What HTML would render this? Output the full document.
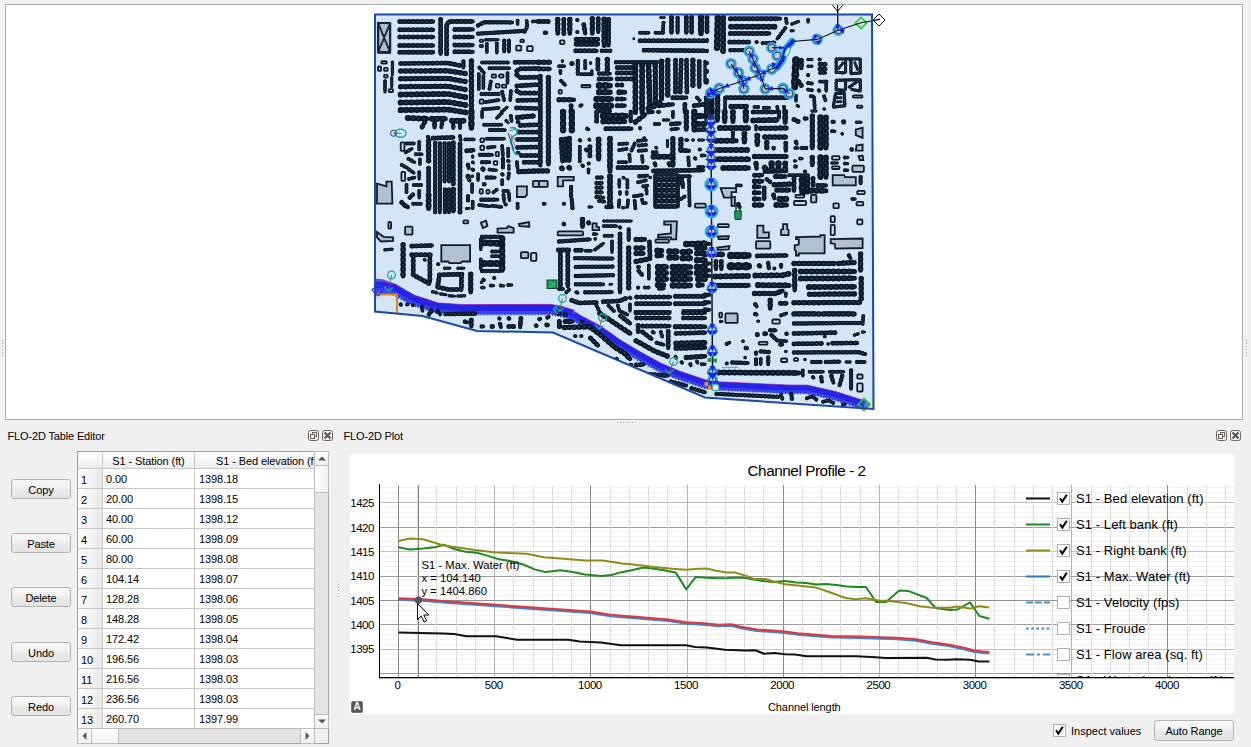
<!DOCTYPE html>
<html><head><meta charset="utf-8"><title>FLO-2D</title>
<style>
html,body{margin:0;padding:0}
body{width:1251px;height:747px;overflow:hidden;background:#f0f0f0;position:relative;font-family:"Liberation Sans",sans-serif;font-size:11px;color:#000}
.abs{position:absolute}
div{position:absolute;box-sizing:border-box;white-space:nowrap}
#map{left:5px;top:4px;width:1238px;height:416px;background:#fff;border:1px solid #adadad;overflow:hidden}
.ttl{font-size:11px;line-height:13px;letter-spacing:-0.15px}
.btn{height:20px;border:1px solid #b2b2b2;border-radius:3px;background:linear-gradient(#f8f8f8,#f0f0f0 48%,#e9e9e9 52%,#e4e4e4);text-align:center;line-height:21px;font-size:11px;letter-spacing:-0.1px}
.dk{width:11px;height:11px;border:1px solid #6a6560;border-radius:2.5px}
#tbl{left:77px;top:451px;width:252px;height:293px;background:#fff;border:1px solid #a0a0a0;overflow:hidden}
.hd{top:452px;height:17px;background:linear-gradient(#ffffff,#f4f4f4 60%,#ececec);border-right:1px solid #c8c8c8;border-bottom:1px solid #c8c8c8;line-height:18px;text-align:center;overflow:hidden;letter-spacing:-0.1px}
.rh{left:78px;width:25px;height:20px;background:linear-gradient(90deg,#ffffff,#f2f2f2 60%,#e8e8e8);border-right:1px solid #c8c8c8;border-bottom:1px solid #c8c8c8;line-height:23px;padding-left:3px;letter-spacing:-0.1px}
.c1{left:103px;width:92px;height:20px;background:#fff;border-right:1px solid #c8c8c8;border-bottom:1px solid #c8c8c8;line-height:21px;padding-left:3px;letter-spacing:-0.1px}
.c2{left:195px;width:120px;height:20px;background:#fff;border-bottom:1px solid #c8c8c8;line-height:21px;padding-left:4px;letter-spacing:-0.1px}
#plot{left:350px;top:454px;width:884px;height:260px;background:#fff;overflow:hidden}
.yl{left:348px;width:26px;text-align:right;line-height:13px;font-size:11.5px;letter-spacing:-0.45px}
.xl{width:40px;text-align:center;line-height:13px;top:679px;font-size:11.5px;letter-spacing:-0.45px}
.dot{width:1px;height:1px;background:#a0a0a0;box-shadow:1px 1px 0 #fff}
.sb{background:linear-gradient(#fbfbfb,#f0f0f0);border:1px solid #bcbcbc}
.cb{width:13px;height:13px;background:#fff;border:1px solid #b0b0b0;padding:0;line-height:0}
.lg{font-size:13px;line-height:18px;letter-spacing:0.08px}
.tip{left:421.5px;font-size:11.3px;line-height:13px}
</style></head><body>
<div id="map">
<svg class="abs" style="left:-6px;top:-5px" width="1251" height="425" viewBox="0 0 1251 425">
<polygon points="375,14.5 872,14.5 873.5,409 705,397.5 553,332.5 477,331 422.5,316 375,311.5" fill="#d4e6f5" stroke="none"/>
<polygon points="374.6,278.4 382.6,279.2 393.8,283.2 400,287 397,295 374.6,294.8" fill="#4a58d8"/>
<path d="M375.0 286.5 L383.0 286.8 L394.0 289.0 L413.0 300.0 L437.0 307.8 L462.5 309.6 L550.5 309.4 L560.0 311.0 L572.8 315.0" fill="none" stroke="#404cee" stroke-width="10.0" stroke-linejoin="round"/>
<path d="M375.0 286.5 L383.0 286.8 L394.0 289.0 L413.0 300.0 L437.0 307.8 L462.5 309.6 L550.5 309.4 L560.0 311.0 L572.8 315.0" transform="translate(-1,2.2)" fill="none" stroke="#2a36e6" stroke-width="7.5" stroke-dasharray="1.1 1.9" stroke-linejoin="round"/>
<path d="M375.0 286.5 L383.0 286.8 L394.0 289.0 L413.0 300.0 L437.0 307.8 L462.5 309.6 L550.5 309.4 L560.0 311.0 L572.8 315.0" transform="translate(0.6,-1.7)" fill="none" stroke="#2424e2" stroke-width="6.4" stroke-linejoin="round"/>
<path d="M572.8 315.6 L579.0 319.3 L599.2 330.0 L619.3 344.1 L639.4 356.1 L659.5 367.1 L679.6 375.6 L705.0 384.1 L718.6 386.0 L786.5 389.2 L806.9 389.4 L834.0 395.5 L864.0 405.0" fill="none" stroke="#404cee" stroke-width="8.4" stroke-linejoin="round"/>
<path d="M572.8 315.6 L579.0 319.3 L599.2 330.0 L619.3 344.1 L639.4 356.1 L659.5 367.1 L679.6 375.6 L705.0 384.1 L718.6 386.0 L786.5 389.2 L806.9 389.4 L834.0 395.5 L864.0 405.0" transform="translate(-1,1.8)" fill="none" stroke="#2a36e6" stroke-width="6.3" stroke-dasharray="1.1 1.9" stroke-linejoin="round"/>
<path d="M572.8 315.6 L579.0 319.3 L599.2 330.0 L619.3 344.1 L639.4 356.1 L659.5 367.1 L679.6 375.6 L705.0 384.1 L718.6 386.0 L786.5 389.2 L806.9 389.4 L834.0 395.5 L864.0 405.0" transform="translate(0.6,-1.4)" fill="none" stroke="#2424e2" stroke-width="5.4" stroke-linejoin="round"/>
<path d="M375.5 281.5 L383.5 281.8 L394.5 284.0 L413.5 295.0 L437.5 302.8 L463.0 304.6 L551.0 304.4 L560.5 306.0 L573.3 310.0 L579.5 315.0 L599.7 325.7 L619.8 339.8 L639.9 351.8 L660.0 362.8 L680.1 371.3 L705.5 379.8 L719.1 381.7 L787.0 384.9 L807.4 385.1 L834.5 391.2 L864.5 400.7" fill="none" stroke="#a020a0" stroke-width="0.8" stroke-opacity="0.8"/>
<clipPath id="mc"><polygon points="375,14.5 872,14.5 873.5,409 705,397.5 553,332.5 477,331 422.5,316 375,311.5"/></clipPath><g clip-path="url(#mc)">
<g stroke="#0b1b2b" stroke-width="1.8">
<rect x="378.1" y="23.0" width="12.0" height="29.5" rx="1" fill="#b3c1cf"/>
<polygon points="377.0,183.6 386.4,186.3 386.4,181.6 391.7,181.6 392.4,203.7 377.0,203.7" fill="#b3c1cf"/>
<polygon points="516.9,186.3 526.9,186.3 526.9,195.0 524.9,197.0 516.9,197.0" fill="#b3c1cf"/>
<rect x="533.0" y="180.9" width="6.7" height="6.0" rx="1" fill="#b3c1cf"/>
<rect x="539.0" y="180.9" width="8.7" height="6.0" rx="1" fill="#b3c1cf"/>
<polygon points="557.7,176.9 573.8,176.9 573.8,180.3 563.1,180.3 563.1,186.3 557.7,186.3" fill="#b3c1cf"/>
<rect x="695.0" y="203.7" width="10.7" height="4.0" rx="1" fill="#b3c1cf"/>
<polygon points="855.8,129.7 862.6,127.6 862.6,137.8 855.8,135.1" fill="#b3c1cf"/>
<polygon points="856.5,145.3 862.6,144.6 862.6,150.7 855.8,150.7" fill="#b3c1cf"/>
<polygon points="858.5,156.2 862.6,155.5 863.3,160.2 859.9,160.2" fill="#b3c1cf"/>
<rect x="852.4" y="165.7" width="11.5" height="6.1" rx="1" fill="#b3c1cf"/>
<polygon points="832.7,175.2 844.3,175.2 844.9,177.2 855.8,177.2 855.8,185.4 832.7,185.4" fill="#b3c1cf"/>
<rect x="811.0" y="194.9" width="5.4" height="7.5" rx="1" fill="#b3c1cf"/>
<polygon points="720.6,188.1 736.2,188.1 736.2,192.2 731.5,192.2 731.5,197.6 724.0,197.6" fill="#b3c1cf"/>
<polygon points="731.5,196.9 734.9,196.9 734.9,205.8 731.5,205.8" fill="#b3c1cf"/>
<rect x="405.1" y="226.7" width="7.4" height="8.0" rx="1" fill="#b3c1cf"/>
<polygon points="377.0,232.1 383.7,236.8 393.1,237.4 393.1,240.8 381.0,241.5 377.0,237.4" fill="#b3c1cf"/>
<polygon points="480.8,222.7 486.1,220.7 487.5,226.1 482.8,228.1" fill="#b3c1cf"/>
<polygon points="497.5,228.7 506.9,228.1 508.2,226.1 513.6,228.1 513.6,232.7 497.5,232.7" fill="#b3c1cf"/>
<polygon points="518.9,224.0 529.0,222.0 529.4,226.7 519.6,226.1" fill="#b3c1cf"/>
<rect x="520.9" y="252.2" width="7.4" height="6.0" rx="1" fill="#b3c1cf"/>
<polygon points="441.3,245.2 470.1,245.2 470.1,261.5 462.0,261.5 460.7,263.1 449.3,263.1 448.0,261.5 441.3,261.5" fill="#b3c1cf"/>
<polygon points="592.5,223.4 596.6,223.4 596.6,226.7 599.2,227.4 599.2,230.1 592.5,230.1" fill="#b3c1cf"/>
<rect x="557.7" y="231.4" width="25.4" height="4.0" rx="1" fill="#b3c1cf"/>
<polygon points="664.2,221.4 676.9,221.4 676.2,239.4 670.9,239.4 670.9,237.4 658.1,237.4 658.1,234.8 670.9,233.4 670.9,224.7 664.2,224.7" fill="#b3c1cf"/>
<rect x="655.5" y="239.4" width="13.4" height="3.3" rx="1" fill="#b3c1cf"/>
<rect x="717.9" y="224.2" width="10.9" height="3.0" rx="1" fill="#b3c1cf"/>
<polygon points="717.9,236.5 728.8,236.2 728.1,239.2 718.6,239.2" fill="#b3c1cf"/>
<polygon points="717.2,247.6 729.5,246.0 728.8,249.4 717.9,249.8" fill="#b3c1cf"/>
<polygon points="757.3,225.6 763.4,225.6 763.4,232.4 768.9,232.4 768.9,237.8 757.3,237.8" fill="#b3c1cf"/>
<rect x="756.0" y="241.2" width="14.3" height="7.5" rx="1" fill="#b3c1cf"/>
<polygon points="783.1,224.2 787.2,224.2 787.2,229.0 788.6,229.7 788.6,235.1 781.1,235.1 781.1,229.7 783.1,229.0" fill="#b3c1cf"/>
<polygon points="796.0,237.1 820.5,236.5 820.5,235.1 824.6,235.1 824.6,253.4 798.8,253.4 798.8,255.5 796.0,255.5 796.0,250.7 794.7,250.0 794.7,245.3 798.8,244.6 798.8,239.2 796.0,239.2" fill="#b3c1cf"/>
<polygon points="830.7,239.2 862.6,238.5 862.6,248.0 835.4,248.7 834.8,243.9 830.7,243.2" fill="#b3c1cf"/>
<rect x="725.4" y="313.4" width="12.2" height="9.5" rx="1" fill="#b3c1cf"/>
</g>
<g fill="none" stroke="#0b1b2b" stroke-linecap="round" stroke-linejoin="round">
<path stroke-width="2.0" stroke-dasharray="0.01 3.20" d="M378.1 23.0 L390.1 52.4 M390.1 23.0 L378.1 52.4"/>
<path stroke-width="1.7" d="M378.1 23.0 L390.1 52.4 M390.1 23.0 L378.1 52.4"/>
<path stroke="#3a5268" stroke-linecap="butt" stroke-width="0.9" stroke-dasharray="1.4 1.81" stroke-dashoffset="0.7" d="M378.1 23.0 L390.1 52.4 M390.1 23.0 L378.1 52.4"/>
<path stroke-width="2.5" stroke-dasharray="0.01 3.20" d="M378.1 23.0 L390.1 23.0 L390.1 52.4 L378.1 52.4 L378.1 23.0 M794.7 312.5 L816.4 312.5 M824.6 312.5 L851.7 312.5"/>
<path stroke-width="2.1" d="M378.1 23.0 L390.1 23.0 L390.1 52.4 L378.1 52.4 L378.1 23.0 M794.7 312.5 L816.4 312.5 M824.6 312.5 L851.7 312.5"/>
<path stroke="#3a5268" stroke-linecap="butt" stroke-width="0.9" stroke-dasharray="1.4 1.81" stroke-dashoffset="0.7" d="M378.1 23.0 L390.1 23.0 L390.1 52.4 L378.1 52.4 L378.1 23.0 M794.7 312.5 L816.4 312.5 M824.6 312.5 L851.7 312.5"/>
<path stroke-width="3.0" stroke-dasharray="0.01 3.20" d="M660.8 17.4 L664.2 17.4 M838.9 68.2 L842.9 62.9 M854.9 62.9 L857.6 69.6 M837.5 97.7 L841.5 97.7 M837.5 101.7 L841.5 101.7 M610.0 284.3 L612.0 284.3"/>
<path stroke-width="2.5" d="M660.8 17.4 L664.2 17.4 M838.9 68.2 L842.9 62.9 M854.9 62.9 L857.6 69.6 M837.5 97.7 L841.5 97.7 M837.5 101.7 L841.5 101.7 M610.0 284.3 L612.0 284.3"/>
<path stroke="#3a5268" stroke-linecap="butt" stroke-width="0.9" stroke-dasharray="1.4 1.81" stroke-dashoffset="0.7" d="M660.8 17.4 L664.2 17.4 M838.9 68.2 L842.9 62.9 M854.9 62.9 L857.6 69.6 M837.5 97.7 L841.5 97.7 M837.5 101.7 L841.5 101.7 M610.0 284.3 L612.0 284.3"/>
<path stroke-width="3.5" stroke-dasharray="0.01 3.20" d="M485.7 39.7 L498.2 39.7 M392.4 62.2 L392.4 74.9 M391.7 77.9 L391.7 87.0 M501.8 111.7 L506.9 107.3 M633.8 38.8 L633.8 38.8 M562.4 60.9 L562.4 61.5 M590.5 62.9 L590.5 63.5 M591.9 70.9 L591.9 74.9 M705.0 61.5 L705.0 83.0 M792.0 24.0 L798.7 21.4 M791.3 30.7 L793.4 30.7 M808.1 59.5 L812.1 59.5 M808.1 66.2 L812.1 66.2 M812.1 111.1 L816.1 111.1 M824.1 109.1 L824.8 109.1 M797.4 105.7 L798.7 106.4 M836.2 72.2 L836.2 58.9 L860.3 58.9 L860.3 72.9 M845.6 58.9 L845.6 72.2 M850.9 58.9 L850.9 73.6 M836.2 72.2 L844.2 72.9 M852.3 73.6 L860.3 72.9 M836.2 89.6 L836.2 80.3 L860.3 79.6 L860.3 91.0 M836.2 89.6 L844.2 90.3 M845.6 80.3 L845.6 89.6 M849.6 87.0 L858.9 80.3 M852.3 89.6 L860.3 91.0 M833.5 105.7 L835.5 93.7 L844.2 92.3 L844.9 105.7 L833.5 107.0 M506.2 120.7 L508.2 122.7 M472.7 156.2 L472.7 157.5 M472.7 162.2 L473.4 162.9 M472.1 176.3 L472.7 176.3 M466.7 208.4 L469.4 208.4 M508.9 165.5 L508.9 169.6 M663.5 120.0 L668.9 120.0 M589.2 139.4 L589.9 140.1 M644.1 138.1 L644.8 138.1 M656.1 147.5 L656.8 148.1 M667.5 140.8 L667.5 146.8 M692.9 140.1 L693.6 140.1 M699.0 140.1 L703.7 140.1 M589.2 207.0 L591.9 207.0 M623.3 177.6 L624.7 178.3 M622.7 207.7 L624.7 207.7 M650.1 177.6 L650.8 177.6 M654.8 176.3 L654.8 205.7 M678.2 176.3 L678.2 205.7 M842.2 133.7 L842.5 134.0 M856.5 122.2 L861.2 122.2 M794.7 160.9 L796.0 160.9 M832.0 163.0 L837.5 163.0 M385.0 249.8 L392.4 249.2 M424.5 259.5 L425.2 260.2 M444.6 268.2 L450.0 268.2 M458.0 268.2 L464.0 268.2 M432.6 291.7 L437.3 293.0 M440.6 293.9 L446.0 294.7 M449.3 295.7 L454.7 296.1 M458.0 296.1 L464.7 295.7 M481.4 282.3 L482.1 282.3 M595.2 238.8 L595.2 239.4 M603.9 221.1 L631.4 221.1 M635.4 311.7 L670.2 311.7 M540.3 318.7 L540.6 319.0 M547.7 317.4 L548.4 317.6 M720.6 321.5 L722.0 321.5 M758.0 321.2 L758.7 321.2 M824.6 336.5 L825.2 336.7 M854.5 335.1 L858.5 333.7 M862.6 332.1 L864.6 332.1 M743.0 341.2 L743.3 341.5 M828.0 343.9 L828.6 343.9 M785.8 351.4 L786.1 351.4 M745.1 357.5 L745.2 357.7 M804.9 359.6 L805.1 359.6 M846.3 362.0 L850.4 362.0"/>
<path stroke-width="2.9" d="M485.7 39.7 L498.2 39.7 M392.4 62.2 L392.4 74.9 M391.7 77.9 L391.7 87.0 M501.8 111.7 L506.9 107.3 M633.8 38.8 L633.8 38.8 M562.4 60.9 L562.4 61.5 M590.5 62.9 L590.5 63.5 M591.9 70.9 L591.9 74.9 M705.0 61.5 L705.0 83.0 M792.0 24.0 L798.7 21.4 M791.3 30.7 L793.4 30.7 M808.1 59.5 L812.1 59.5 M808.1 66.2 L812.1 66.2 M812.1 111.1 L816.1 111.1 M824.1 109.1 L824.8 109.1 M797.4 105.7 L798.7 106.4 M836.2 72.2 L836.2 58.9 L860.3 58.9 L860.3 72.9 M845.6 58.9 L845.6 72.2 M850.9 58.9 L850.9 73.6 M836.2 72.2 L844.2 72.9 M852.3 73.6 L860.3 72.9 M836.2 89.6 L836.2 80.3 L860.3 79.6 L860.3 91.0 M836.2 89.6 L844.2 90.3 M845.6 80.3 L845.6 89.6 M849.6 87.0 L858.9 80.3 M852.3 89.6 L860.3 91.0 M833.5 105.7 L835.5 93.7 L844.2 92.3 L844.9 105.7 L833.5 107.0 M506.2 120.7 L508.2 122.7 M472.7 156.2 L472.7 157.5 M472.7 162.2 L473.4 162.9 M472.1 176.3 L472.7 176.3 M466.7 208.4 L469.4 208.4 M508.9 165.5 L508.9 169.6 M663.5 120.0 L668.9 120.0 M589.2 139.4 L589.9 140.1 M644.1 138.1 L644.8 138.1 M656.1 147.5 L656.8 148.1 M667.5 140.8 L667.5 146.8 M692.9 140.1 L693.6 140.1 M699.0 140.1 L703.7 140.1 M589.2 207.0 L591.9 207.0 M623.3 177.6 L624.7 178.3 M622.7 207.7 L624.7 207.7 M650.1 177.6 L650.8 177.6 M654.8 176.3 L654.8 205.7 M678.2 176.3 L678.2 205.7 M842.2 133.7 L842.5 134.0 M856.5 122.2 L861.2 122.2 M794.7 160.9 L796.0 160.9 M832.0 163.0 L837.5 163.0 M385.0 249.8 L392.4 249.2 M424.5 259.5 L425.2 260.2 M444.6 268.2 L450.0 268.2 M458.0 268.2 L464.0 268.2 M432.6 291.7 L437.3 293.0 M440.6 293.9 L446.0 294.7 M449.3 295.7 L454.7 296.1 M458.0 296.1 L464.7 295.7 M481.4 282.3 L482.1 282.3 M595.2 238.8 L595.2 239.4 M603.9 221.1 L631.4 221.1 M635.4 311.7 L670.2 311.7 M540.3 318.7 L540.6 319.0 M547.7 317.4 L548.4 317.6 M720.6 321.5 L722.0 321.5 M758.0 321.2 L758.7 321.2 M824.6 336.5 L825.2 336.7 M854.5 335.1 L858.5 333.7 M862.6 332.1 L864.6 332.1 M743.0 341.2 L743.3 341.5 M828.0 343.9 L828.6 343.9 M785.8 351.4 L786.1 351.4 M745.1 357.5 L745.2 357.7 M804.9 359.6 L805.1 359.6 M846.3 362.0 L850.4 362.0"/>
<path stroke="#3a5268" stroke-linecap="butt" stroke-width="0.9" stroke-dasharray="1.4 1.81" stroke-dashoffset="0.7" d="M485.7 39.7 L498.2 39.7 M392.4 62.2 L392.4 74.9 M391.7 77.9 L391.7 87.0 M501.8 111.7 L506.9 107.3 M633.8 38.8 L633.8 38.8 M562.4 60.9 L562.4 61.5 M590.5 62.9 L590.5 63.5 M591.9 70.9 L591.9 74.9 M705.0 61.5 L705.0 83.0 M792.0 24.0 L798.7 21.4 M791.3 30.7 L793.4 30.7 M808.1 59.5 L812.1 59.5 M808.1 66.2 L812.1 66.2 M812.1 111.1 L816.1 111.1 M824.1 109.1 L824.8 109.1 M797.4 105.7 L798.7 106.4 M836.2 72.2 L836.2 58.9 L860.3 58.9 L860.3 72.9 M845.6 58.9 L845.6 72.2 M850.9 58.9 L850.9 73.6 M836.2 72.2 L844.2 72.9 M852.3 73.6 L860.3 72.9 M836.2 89.6 L836.2 80.3 L860.3 79.6 L860.3 91.0 M836.2 89.6 L844.2 90.3 M845.6 80.3 L845.6 89.6 M849.6 87.0 L858.9 80.3 M852.3 89.6 L860.3 91.0 M833.5 105.7 L835.5 93.7 L844.2 92.3 L844.9 105.7 L833.5 107.0 M506.2 120.7 L508.2 122.7 M472.7 156.2 L472.7 157.5 M472.7 162.2 L473.4 162.9 M472.1 176.3 L472.7 176.3 M466.7 208.4 L469.4 208.4 M508.9 165.5 L508.9 169.6 M663.5 120.0 L668.9 120.0 M589.2 139.4 L589.9 140.1 M644.1 138.1 L644.8 138.1 M656.1 147.5 L656.8 148.1 M667.5 140.8 L667.5 146.8 M692.9 140.1 L693.6 140.1 M699.0 140.1 L703.7 140.1 M589.2 207.0 L591.9 207.0 M623.3 177.6 L624.7 178.3 M622.7 207.7 L624.7 207.7 M650.1 177.6 L650.8 177.6 M654.8 176.3 L654.8 205.7 M678.2 176.3 L678.2 205.7 M842.2 133.7 L842.5 134.0 M856.5 122.2 L861.2 122.2 M794.7 160.9 L796.0 160.9 M832.0 163.0 L837.5 163.0 M385.0 249.8 L392.4 249.2 M424.5 259.5 L425.2 260.2 M444.6 268.2 L450.0 268.2 M458.0 268.2 L464.0 268.2 M432.6 291.7 L437.3 293.0 M440.6 293.9 L446.0 294.7 M449.3 295.7 L454.7 296.1 M458.0 296.1 L464.7 295.7 M481.4 282.3 L482.1 282.3 M595.2 238.8 L595.2 239.4 M603.9 221.1 L631.4 221.1 M635.4 311.7 L670.2 311.7 M540.3 318.7 L540.6 319.0 M547.7 317.4 L548.4 317.6 M720.6 321.5 L722.0 321.5 M758.0 321.2 L758.7 321.2 M824.6 336.5 L825.2 336.7 M854.5 335.1 L858.5 333.7 M862.6 332.1 L864.6 332.1 M743.0 341.2 L743.3 341.5 M828.0 343.9 L828.6 343.9 M785.8 351.4 L786.1 351.4 M745.1 357.5 L745.2 357.7 M804.9 359.6 L805.1 359.6 M846.3 362.0 L850.4 362.0"/>
<path stroke-width="4.0" stroke-dasharray="0.01 3.60" d="M517.6 20.7 L517.6 24.3 M526.7 21.1 L527.2 26.7 L524.5 32.1 M533.0 21.4 L539.0 21.4 M486.8 44.1 L486.8 52.2 M496.8 43.5 L496.8 52.8 M385.0 81.2 L385.0 91.7 M482.1 62.5 L508.2 62.5 M479.4 67.6 L484.1 72.9 M489.5 68.2 L509.5 68.2 M478.8 74.2 L478.8 89.0 M483.4 76.3 L483.4 88.3 M507.5 73.2 L507.5 83.0 M490.8 81.6 L489.5 89.0 M502.2 91.9 L504.2 100.4 M510.9 91.3 L510.2 100.4 M485.7 102.0 L498.8 100.0 M483.0 109.3 L498.8 108.0 M577.2 20.0 L577.8 20.0 M577.2 32.1 L577.8 32.1 M663.5 22.7 L662.8 32.7 M640.1 32.7 L648.8 32.7 M655.5 32.7 L663.5 32.7 M559.1 66.2 L564.4 66.2 M560.4 70.9 L560.4 73.6 M561.1 80.9 L565.1 85.0 M580.5 105.7 L581.8 105.0 M585.2 60.9 L585.2 68.2 M581.2 74.2 L591.2 74.2 M697.0 97.7 L699.6 100.4 M707.0 40.1 L707.0 41.5 M707.0 50.8 L707.0 51.5 M707.0 62.9 L707.0 63.5 M707.0 70.9 L707.0 72.2 M707.0 80.3 L707.0 83.0 M756.5 42.1 L757.2 42.1 M762.6 43.1 L774.6 42.5 M786.0 18.7 L786.7 23.4 M808.1 20.0 L808.1 22.0 M785.3 28.1 L777.3 38.8 M808.1 74.9 L808.1 75.6 M808.1 83.0 L812.1 83.6 M808.1 89.6 L812.1 90.3 M819.5 59.5 L820.1 59.5 M820.1 72.9 L825.5 72.9 M820.1 81.6 L826.8 81.6 M826.2 81.6 L826.2 91.0 M818.8 90.3 L819.5 91.0 M810.8 96.3 L813.4 96.3 M814.1 97.7 L814.8 108.4 M824.1 96.3 L825.5 100.4 M796.0 95.7 L796.0 101.0 M725.1 97.7 L725.1 112.4 M754.5 107.0 L758.5 107.0 M763.9 107.7 L769.3 107.7 M777.3 107.0 L778.0 112.4 M784.0 107.0 L784.7 112.4 M482.1 112.0 L482.1 117.4 M501.5 113.3 L496.8 118.0 M510.9 116.0 L511.6 121.4 M484.1 124.7 L501.5 124.7 M517.6 122.0 L518.9 122.0 M517.6 152.8 L518.9 152.8 M516.9 162.2 L517.6 168.2 M427.9 136.8 L428.6 137.4 M460.0 136.1 L460.7 140.1 M465.4 139.4 L474.1 139.4 M406.5 143.5 L413.8 143.5 M419.2 142.1 L419.2 149.5 M405.8 152.2 L411.8 148.8 M415.8 154.2 L421.9 154.2 M408.5 158.9 L414.5 162.2 M419.9 159.5 L419.9 164.2 M401.8 164.9 L407.8 168.2 M409.1 169.6 L413.8 172.9 M419.2 172.2 L419.2 178.9 M409.1 178.9 L414.5 177.6 M413.8 185.0 L421.2 185.0 M406.5 185.0 L406.5 192.3 M419.2 191.0 L419.2 197.7 M413.2 203.7 L421.2 203.7 M472.7 169.6 L473.4 170.2 M472.1 184.3 L472.1 192.3 M472.7 201.7 L472.7 208.4 M478.1 174.2 L478.1 180.3 M486.8 138.8 L504.2 138.8 M488.1 147.5 L494.8 146.8 M502.2 146.1 L502.9 155.5 M508.2 148.8 L508.2 156.2 M508.2 160.9 L508.9 161.5 M489.5 169.6 L496.2 170.2 M502.2 174.2 L502.9 174.9 M508.9 173.6 L508.2 178.9 M502.2 180.3 L502.2 184.3 M493.5 192.3 L496.8 189.6 M503.5 191.0 L508.2 191.0 M503.5 195.0 L504.2 201.7 M508.9 193.7 L509.5 200.4 M479.4 205.0 L489.5 206.4 M492.1 205.7 L501.5 207.0 M505.5 204.4 L506.2 204.4 M517.6 203.7 L517.6 208.4 M587.2 128.7 L588.5 129.4 M658.1 112.0 L659.5 112.0 M640.1 128.1 L640.1 128.7 M654.8 124.0 L659.5 124.0 M671.5 129.4 L678.2 128.7 M672.9 112.0 L672.9 117.4 M579.8 140.1 L580.5 140.8 M579.8 146.8 L579.8 161.5 M585.9 149.5 L586.5 150.8 M582.5 165.5 L583.2 166.2 M588.5 163.5 L589.2 163.5 M588.5 169.6 L588.5 172.9 M619.3 144.1 L627.4 143.5 M634.7 143.5 L631.4 150.8 M619.3 150.2 L626.7 148.8 M629.4 154.8 L630.0 161.5 M618.7 162.2 L626.0 162.2 M638.1 140.8 L646.1 140.1 M638.7 145.5 L646.1 144.8 M638.7 150.8 L646.1 150.2 M642.1 156.2 L642.7 162.2 M652.8 152.2 L656.8 152.2 M686.3 140.1 L687.6 140.1 M699.6 149.5 L700.3 149.5 M688.3 157.5 L688.9 165.5 M695.0 158.2 L695.6 158.9 M701.7 155.5 L705.0 155.5 M698.3 166.9 L703.7 166.9 M543.7 203.7 L545.0 203.7 M563.8 203.7 L564.4 203.7 M599.2 201.0 L604.6 201.7 M619.3 180.3 L619.3 187.0 M627.4 180.3 L627.4 187.6 M620.0 192.3 L620.0 194.3 M626.7 192.3 L626.7 194.3 M619.3 200.4 L618.7 207.0 M628.0 200.4 L627.4 207.0 M638.1 182.3 L646.1 180.3 M643.4 186.3 L647.4 185.6 M646.1 187.0 L646.8 193.7 M634.0 196.3 L642.1 195.0 M634.7 201.0 L635.4 208.4 M642.1 199.7 L642.7 203.0 M644.8 203.0 L646.1 203.0 M655.5 174.9 L677.6 174.9 M679.6 176.3 L690.3 176.3 M688.9 176.3 L689.6 205.7 M680.9 199.0 L684.9 196.3 M756.0 126.3 L756.0 129.7 M832.0 131.3 L834.8 131.3 M795.4 148.0 L798.1 148.0 M800.1 158.6 L802.1 158.6 M844.9 157.5 L847.7 157.5 M844.9 163.6 L847.7 163.6 M844.9 170.2 L847.7 170.2 M852.4 199.0 L855.1 199.0 M804.9 171.4 L805.5 171.4 M789.2 175.2 L808.3 175.2 M736.9 185.4 L741.0 185.4 M438.2 264.2 L438.3 264.3 M480.8 239.4 L480.8 249.5 M492.1 251.5 L498.8 251.5 M492.1 256.2 L498.8 256.2 M480.8 259.5 L480.8 268.9 M483.4 279.6 L484.1 280.3 M494.2 277.9 L494.3 278.0 M482.1 287.6 L484.1 287.6 M490.8 285.6 L493.5 285.6 M500.8 285.6 L503.5 285.9 M508.2 285.0 L511.6 285.0 M400.7 304.4 L401.1 305.0 M407.1 304.4 L407.8 304.4 M412.9 305.0 L413.2 305.4 M421.9 306.4 L422.5 311.1 M430.6 310.4 L431.9 311.7 M593.9 234.1 L596.6 234.1 M603.9 226.1 L616.6 226.1 M620.0 227.4 L620.3 227.7 M604.6 235.8 L612.0 235.8 M612.0 241.5 L612.0 252.2 M585.9 250.8 L591.2 250.8 M595.2 249.5 L603.3 243.5 M576.5 292.3 L577.8 293.0 M559.1 289.0 L563.1 289.0 M566.4 292.3 L569.1 289.6 M630.0 297.7 L630.7 298.3 M596.6 305.7 L599.2 311.1 M608.6 305.7 L614.0 311.1 M618.0 305.7 L619.3 311.1 M630.0 304.4 L630.0 311.1 M638.1 266.9 L639.4 266.9 M648.8 265.5 L648.8 278.9 M638.1 287.6 L638.3 287.9 M644.8 287.6 L648.8 287.6 M683.6 311.1 L705.0 311.1 M774.3 268.4 L774.6 268.4 M785.8 293.5 L785.8 296.2 M547.0 325.4 L547.7 325.4 M559.1 313.3 L560.4 313.6 M559.1 321.4 L560.4 326.7 M581.8 321.4 L583.2 321.6 M575.1 336.1 L575.8 336.1 M581.2 336.1 L581.8 336.1 M622.0 312.0 L627.4 314.7 M652.8 332.1 L654.1 332.7 M660.8 332.1 L662.2 336.8 M675.5 356.8 L676.2 358.2 M681.6 362.2 L682.2 362.9 M690.3 364.2 L690.9 365.5 M697.0 361.5 L697.6 362.9 M701.7 364.2 L705.0 364.2 M781.1 315.4 L786.5 313.4 M863.3 316.1 L862.6 324.2 M777.0 340.5 L786.5 341.2 M726.7 343.9 L729.5 342.6 M726.7 363.4 L727.0 363.4 M760.7 358.9 L760.7 364.3 M802.8 370.4 L802.8 375.9 M809.6 371.8 L823.2 371.8 M830.0 371.8 L843.6 371.8 M813.0 377.2 L813.7 377.9 M781.1 394.9 L782.4 399.0 M806.9 398.3 L812.3 396.2 L816.4 399.6 M823.2 401.7 L828.6 400.3 L833.4 403.0 M842.9 404.4 L844.9 404.4 M499.3 318.4 L499.6 318.7 M539.3 319.2 L539.6 319.5 M547.3 317.6 L548.9 316.8"/>
<path stroke-width="3.4" d="M517.6 20.7 L517.6 24.3 M526.7 21.1 L527.2 26.7 L524.5 32.1 M533.0 21.4 L539.0 21.4 M486.8 44.1 L486.8 52.2 M496.8 43.5 L496.8 52.8 M385.0 81.2 L385.0 91.7 M482.1 62.5 L508.2 62.5 M479.4 67.6 L484.1 72.9 M489.5 68.2 L509.5 68.2 M478.8 74.2 L478.8 89.0 M483.4 76.3 L483.4 88.3 M507.5 73.2 L507.5 83.0 M490.8 81.6 L489.5 89.0 M502.2 91.9 L504.2 100.4 M510.9 91.3 L510.2 100.4 M485.7 102.0 L498.8 100.0 M483.0 109.3 L498.8 108.0 M577.2 20.0 L577.8 20.0 M577.2 32.1 L577.8 32.1 M663.5 22.7 L662.8 32.7 M640.1 32.7 L648.8 32.7 M655.5 32.7 L663.5 32.7 M559.1 66.2 L564.4 66.2 M560.4 70.9 L560.4 73.6 M561.1 80.9 L565.1 85.0 M580.5 105.7 L581.8 105.0 M585.2 60.9 L585.2 68.2 M581.2 74.2 L591.2 74.2 M697.0 97.7 L699.6 100.4 M707.0 40.1 L707.0 41.5 M707.0 50.8 L707.0 51.5 M707.0 62.9 L707.0 63.5 M707.0 70.9 L707.0 72.2 M707.0 80.3 L707.0 83.0 M756.5 42.1 L757.2 42.1 M762.6 43.1 L774.6 42.5 M786.0 18.7 L786.7 23.4 M808.1 20.0 L808.1 22.0 M785.3 28.1 L777.3 38.8 M808.1 74.9 L808.1 75.6 M808.1 83.0 L812.1 83.6 M808.1 89.6 L812.1 90.3 M819.5 59.5 L820.1 59.5 M820.1 72.9 L825.5 72.9 M820.1 81.6 L826.8 81.6 M826.2 81.6 L826.2 91.0 M818.8 90.3 L819.5 91.0 M810.8 96.3 L813.4 96.3 M814.1 97.7 L814.8 108.4 M824.1 96.3 L825.5 100.4 M796.0 95.7 L796.0 101.0 M725.1 97.7 L725.1 112.4 M754.5 107.0 L758.5 107.0 M763.9 107.7 L769.3 107.7 M777.3 107.0 L778.0 112.4 M784.0 107.0 L784.7 112.4 M482.1 112.0 L482.1 117.4 M501.5 113.3 L496.8 118.0 M510.9 116.0 L511.6 121.4 M484.1 124.7 L501.5 124.7 M517.6 122.0 L518.9 122.0 M517.6 152.8 L518.9 152.8 M516.9 162.2 L517.6 168.2 M427.9 136.8 L428.6 137.4 M460.0 136.1 L460.7 140.1 M465.4 139.4 L474.1 139.4 M406.5 143.5 L413.8 143.5 M419.2 142.1 L419.2 149.5 M405.8 152.2 L411.8 148.8 M415.8 154.2 L421.9 154.2 M408.5 158.9 L414.5 162.2 M419.9 159.5 L419.9 164.2 M401.8 164.9 L407.8 168.2 M409.1 169.6 L413.8 172.9 M419.2 172.2 L419.2 178.9 M409.1 178.9 L414.5 177.6 M413.8 185.0 L421.2 185.0 M406.5 185.0 L406.5 192.3 M419.2 191.0 L419.2 197.7 M413.2 203.7 L421.2 203.7 M472.7 169.6 L473.4 170.2 M472.1 184.3 L472.1 192.3 M472.7 201.7 L472.7 208.4 M478.1 174.2 L478.1 180.3 M486.8 138.8 L504.2 138.8 M488.1 147.5 L494.8 146.8 M502.2 146.1 L502.9 155.5 M508.2 148.8 L508.2 156.2 M508.2 160.9 L508.9 161.5 M489.5 169.6 L496.2 170.2 M502.2 174.2 L502.9 174.9 M508.9 173.6 L508.2 178.9 M502.2 180.3 L502.2 184.3 M493.5 192.3 L496.8 189.6 M503.5 191.0 L508.2 191.0 M503.5 195.0 L504.2 201.7 M508.9 193.7 L509.5 200.4 M479.4 205.0 L489.5 206.4 M492.1 205.7 L501.5 207.0 M505.5 204.4 L506.2 204.4 M517.6 203.7 L517.6 208.4 M587.2 128.7 L588.5 129.4 M658.1 112.0 L659.5 112.0 M640.1 128.1 L640.1 128.7 M654.8 124.0 L659.5 124.0 M671.5 129.4 L678.2 128.7 M672.9 112.0 L672.9 117.4 M579.8 140.1 L580.5 140.8 M579.8 146.8 L579.8 161.5 M585.9 149.5 L586.5 150.8 M582.5 165.5 L583.2 166.2 M588.5 163.5 L589.2 163.5 M588.5 169.6 L588.5 172.9 M619.3 144.1 L627.4 143.5 M634.7 143.5 L631.4 150.8 M619.3 150.2 L626.7 148.8 M629.4 154.8 L630.0 161.5 M618.7 162.2 L626.0 162.2 M638.1 140.8 L646.1 140.1 M638.7 145.5 L646.1 144.8 M638.7 150.8 L646.1 150.2 M642.1 156.2 L642.7 162.2 M652.8 152.2 L656.8 152.2 M686.3 140.1 L687.6 140.1 M699.6 149.5 L700.3 149.5 M688.3 157.5 L688.9 165.5 M695.0 158.2 L695.6 158.9 M701.7 155.5 L705.0 155.5 M698.3 166.9 L703.7 166.9 M543.7 203.7 L545.0 203.7 M563.8 203.7 L564.4 203.7 M599.2 201.0 L604.6 201.7 M619.3 180.3 L619.3 187.0 M627.4 180.3 L627.4 187.6 M620.0 192.3 L620.0 194.3 M626.7 192.3 L626.7 194.3 M619.3 200.4 L618.7 207.0 M628.0 200.4 L627.4 207.0 M638.1 182.3 L646.1 180.3 M643.4 186.3 L647.4 185.6 M646.1 187.0 L646.8 193.7 M634.0 196.3 L642.1 195.0 M634.7 201.0 L635.4 208.4 M642.1 199.7 L642.7 203.0 M644.8 203.0 L646.1 203.0 M655.5 174.9 L677.6 174.9 M679.6 176.3 L690.3 176.3 M688.9 176.3 L689.6 205.7 M680.9 199.0 L684.9 196.3 M756.0 126.3 L756.0 129.7 M832.0 131.3 L834.8 131.3 M795.4 148.0 L798.1 148.0 M800.1 158.6 L802.1 158.6 M844.9 157.5 L847.7 157.5 M844.9 163.6 L847.7 163.6 M844.9 170.2 L847.7 170.2 M852.4 199.0 L855.1 199.0 M804.9 171.4 L805.5 171.4 M789.2 175.2 L808.3 175.2 M736.9 185.4 L741.0 185.4 M438.2 264.2 L438.3 264.3 M480.8 239.4 L480.8 249.5 M492.1 251.5 L498.8 251.5 M492.1 256.2 L498.8 256.2 M480.8 259.5 L480.8 268.9 M483.4 279.6 L484.1 280.3 M494.2 277.9 L494.3 278.0 M482.1 287.6 L484.1 287.6 M490.8 285.6 L493.5 285.6 M500.8 285.6 L503.5 285.9 M508.2 285.0 L511.6 285.0 M400.7 304.4 L401.1 305.0 M407.1 304.4 L407.8 304.4 M412.9 305.0 L413.2 305.4 M421.9 306.4 L422.5 311.1 M430.6 310.4 L431.9 311.7 M593.9 234.1 L596.6 234.1 M603.9 226.1 L616.6 226.1 M620.0 227.4 L620.3 227.7 M604.6 235.8 L612.0 235.8 M612.0 241.5 L612.0 252.2 M585.9 250.8 L591.2 250.8 M595.2 249.5 L603.3 243.5 M576.5 292.3 L577.8 293.0 M559.1 289.0 L563.1 289.0 M566.4 292.3 L569.1 289.6 M630.0 297.7 L630.7 298.3 M596.6 305.7 L599.2 311.1 M608.6 305.7 L614.0 311.1 M618.0 305.7 L619.3 311.1 M630.0 304.4 L630.0 311.1 M638.1 266.9 L639.4 266.9 M648.8 265.5 L648.8 278.9 M638.1 287.6 L638.3 287.9 M644.8 287.6 L648.8 287.6 M683.6 311.1 L705.0 311.1 M774.3 268.4 L774.6 268.4 M785.8 293.5 L785.8 296.2 M547.0 325.4 L547.7 325.4 M559.1 313.3 L560.4 313.6 M559.1 321.4 L560.4 326.7 M581.8 321.4 L583.2 321.6 M575.1 336.1 L575.8 336.1 M581.2 336.1 L581.8 336.1 M622.0 312.0 L627.4 314.7 M652.8 332.1 L654.1 332.7 M660.8 332.1 L662.2 336.8 M675.5 356.8 L676.2 358.2 M681.6 362.2 L682.2 362.9 M690.3 364.2 L690.9 365.5 M697.0 361.5 L697.6 362.9 M701.7 364.2 L705.0 364.2 M781.1 315.4 L786.5 313.4 M863.3 316.1 L862.6 324.2 M777.0 340.5 L786.5 341.2 M726.7 343.9 L729.5 342.6 M726.7 363.4 L727.0 363.4 M760.7 358.9 L760.7 364.3 M802.8 370.4 L802.8 375.9 M809.6 371.8 L823.2 371.8 M830.0 371.8 L843.6 371.8 M813.0 377.2 L813.7 377.9 M781.1 394.9 L782.4 399.0 M806.9 398.3 L812.3 396.2 L816.4 399.6 M823.2 401.7 L828.6 400.3 L833.4 403.0 M842.9 404.4 L844.9 404.4 M499.3 318.4 L499.6 318.7 M539.3 319.2 L539.6 319.5 M547.3 317.6 L548.9 316.8"/>
<path stroke="#3a5268" stroke-linecap="butt" stroke-width="1.0" stroke-dasharray="1.4 2.21" stroke-dashoffset="0.7" d="M517.6 20.7 L517.6 24.3 M526.7 21.1 L527.2 26.7 L524.5 32.1 M533.0 21.4 L539.0 21.4 M486.8 44.1 L486.8 52.2 M496.8 43.5 L496.8 52.8 M385.0 81.2 L385.0 91.7 M482.1 62.5 L508.2 62.5 M479.4 67.6 L484.1 72.9 M489.5 68.2 L509.5 68.2 M478.8 74.2 L478.8 89.0 M483.4 76.3 L483.4 88.3 M507.5 73.2 L507.5 83.0 M490.8 81.6 L489.5 89.0 M502.2 91.9 L504.2 100.4 M510.9 91.3 L510.2 100.4 M485.7 102.0 L498.8 100.0 M483.0 109.3 L498.8 108.0 M577.2 20.0 L577.8 20.0 M577.2 32.1 L577.8 32.1 M663.5 22.7 L662.8 32.7 M640.1 32.7 L648.8 32.7 M655.5 32.7 L663.5 32.7 M559.1 66.2 L564.4 66.2 M560.4 70.9 L560.4 73.6 M561.1 80.9 L565.1 85.0 M580.5 105.7 L581.8 105.0 M585.2 60.9 L585.2 68.2 M581.2 74.2 L591.2 74.2 M697.0 97.7 L699.6 100.4 M707.0 40.1 L707.0 41.5 M707.0 50.8 L707.0 51.5 M707.0 62.9 L707.0 63.5 M707.0 70.9 L707.0 72.2 M707.0 80.3 L707.0 83.0 M756.5 42.1 L757.2 42.1 M762.6 43.1 L774.6 42.5 M786.0 18.7 L786.7 23.4 M808.1 20.0 L808.1 22.0 M785.3 28.1 L777.3 38.8 M808.1 74.9 L808.1 75.6 M808.1 83.0 L812.1 83.6 M808.1 89.6 L812.1 90.3 M819.5 59.5 L820.1 59.5 M820.1 72.9 L825.5 72.9 M820.1 81.6 L826.8 81.6 M826.2 81.6 L826.2 91.0 M818.8 90.3 L819.5 91.0 M810.8 96.3 L813.4 96.3 M814.1 97.7 L814.8 108.4 M824.1 96.3 L825.5 100.4 M796.0 95.7 L796.0 101.0 M725.1 97.7 L725.1 112.4 M754.5 107.0 L758.5 107.0 M763.9 107.7 L769.3 107.7 M777.3 107.0 L778.0 112.4 M784.0 107.0 L784.7 112.4 M482.1 112.0 L482.1 117.4 M501.5 113.3 L496.8 118.0 M510.9 116.0 L511.6 121.4 M484.1 124.7 L501.5 124.7 M517.6 122.0 L518.9 122.0 M517.6 152.8 L518.9 152.8 M516.9 162.2 L517.6 168.2 M427.9 136.8 L428.6 137.4 M460.0 136.1 L460.7 140.1 M465.4 139.4 L474.1 139.4 M406.5 143.5 L413.8 143.5 M419.2 142.1 L419.2 149.5 M405.8 152.2 L411.8 148.8 M415.8 154.2 L421.9 154.2 M408.5 158.9 L414.5 162.2 M419.9 159.5 L419.9 164.2 M401.8 164.9 L407.8 168.2 M409.1 169.6 L413.8 172.9 M419.2 172.2 L419.2 178.9 M409.1 178.9 L414.5 177.6 M413.8 185.0 L421.2 185.0 M406.5 185.0 L406.5 192.3 M419.2 191.0 L419.2 197.7 M413.2 203.7 L421.2 203.7 M472.7 169.6 L473.4 170.2 M472.1 184.3 L472.1 192.3 M472.7 201.7 L472.7 208.4 M478.1 174.2 L478.1 180.3 M486.8 138.8 L504.2 138.8 M488.1 147.5 L494.8 146.8 M502.2 146.1 L502.9 155.5 M508.2 148.8 L508.2 156.2 M508.2 160.9 L508.9 161.5 M489.5 169.6 L496.2 170.2 M502.2 174.2 L502.9 174.9 M508.9 173.6 L508.2 178.9 M502.2 180.3 L502.2 184.3 M493.5 192.3 L496.8 189.6 M503.5 191.0 L508.2 191.0 M503.5 195.0 L504.2 201.7 M508.9 193.7 L509.5 200.4 M479.4 205.0 L489.5 206.4 M492.1 205.7 L501.5 207.0 M505.5 204.4 L506.2 204.4 M517.6 203.7 L517.6 208.4 M587.2 128.7 L588.5 129.4 M658.1 112.0 L659.5 112.0 M640.1 128.1 L640.1 128.7 M654.8 124.0 L659.5 124.0 M671.5 129.4 L678.2 128.7 M672.9 112.0 L672.9 117.4 M579.8 140.1 L580.5 140.8 M579.8 146.8 L579.8 161.5 M585.9 149.5 L586.5 150.8 M582.5 165.5 L583.2 166.2 M588.5 163.5 L589.2 163.5 M588.5 169.6 L588.5 172.9 M619.3 144.1 L627.4 143.5 M634.7 143.5 L631.4 150.8 M619.3 150.2 L626.7 148.8 M629.4 154.8 L630.0 161.5 M618.7 162.2 L626.0 162.2 M638.1 140.8 L646.1 140.1 M638.7 145.5 L646.1 144.8 M638.7 150.8 L646.1 150.2 M642.1 156.2 L642.7 162.2 M652.8 152.2 L656.8 152.2 M686.3 140.1 L687.6 140.1 M699.6 149.5 L700.3 149.5 M688.3 157.5 L688.9 165.5 M695.0 158.2 L695.6 158.9 M701.7 155.5 L705.0 155.5 M698.3 166.9 L703.7 166.9 M543.7 203.7 L545.0 203.7 M563.8 203.7 L564.4 203.7 M599.2 201.0 L604.6 201.7 M619.3 180.3 L619.3 187.0 M627.4 180.3 L627.4 187.6 M620.0 192.3 L620.0 194.3 M626.7 192.3 L626.7 194.3 M619.3 200.4 L618.7 207.0 M628.0 200.4 L627.4 207.0 M638.1 182.3 L646.1 180.3 M643.4 186.3 L647.4 185.6 M646.1 187.0 L646.8 193.7 M634.0 196.3 L642.1 195.0 M634.7 201.0 L635.4 208.4 M642.1 199.7 L642.7 203.0 M644.8 203.0 L646.1 203.0 M655.5 174.9 L677.6 174.9 M679.6 176.3 L690.3 176.3 M688.9 176.3 L689.6 205.7 M680.9 199.0 L684.9 196.3 M756.0 126.3 L756.0 129.7 M832.0 131.3 L834.8 131.3 M795.4 148.0 L798.1 148.0 M800.1 158.6 L802.1 158.6 M844.9 157.5 L847.7 157.5 M844.9 163.6 L847.7 163.6 M844.9 170.2 L847.7 170.2 M852.4 199.0 L855.1 199.0 M804.9 171.4 L805.5 171.4 M789.2 175.2 L808.3 175.2 M736.9 185.4 L741.0 185.4 M438.2 264.2 L438.3 264.3 M480.8 239.4 L480.8 249.5 M492.1 251.5 L498.8 251.5 M492.1 256.2 L498.8 256.2 M480.8 259.5 L480.8 268.9 M483.4 279.6 L484.1 280.3 M494.2 277.9 L494.3 278.0 M482.1 287.6 L484.1 287.6 M490.8 285.6 L493.5 285.6 M500.8 285.6 L503.5 285.9 M508.2 285.0 L511.6 285.0 M400.7 304.4 L401.1 305.0 M407.1 304.4 L407.8 304.4 M412.9 305.0 L413.2 305.4 M421.9 306.4 L422.5 311.1 M430.6 310.4 L431.9 311.7 M593.9 234.1 L596.6 234.1 M603.9 226.1 L616.6 226.1 M620.0 227.4 L620.3 227.7 M604.6 235.8 L612.0 235.8 M612.0 241.5 L612.0 252.2 M585.9 250.8 L591.2 250.8 M595.2 249.5 L603.3 243.5 M576.5 292.3 L577.8 293.0 M559.1 289.0 L563.1 289.0 M566.4 292.3 L569.1 289.6 M630.0 297.7 L630.7 298.3 M596.6 305.7 L599.2 311.1 M608.6 305.7 L614.0 311.1 M618.0 305.7 L619.3 311.1 M630.0 304.4 L630.0 311.1 M638.1 266.9 L639.4 266.9 M648.8 265.5 L648.8 278.9 M638.1 287.6 L638.3 287.9 M644.8 287.6 L648.8 287.6 M683.6 311.1 L705.0 311.1 M774.3 268.4 L774.6 268.4 M785.8 293.5 L785.8 296.2 M547.0 325.4 L547.7 325.4 M559.1 313.3 L560.4 313.6 M559.1 321.4 L560.4 326.7 M581.8 321.4 L583.2 321.6 M575.1 336.1 L575.8 336.1 M581.2 336.1 L581.8 336.1 M622.0 312.0 L627.4 314.7 M652.8 332.1 L654.1 332.7 M660.8 332.1 L662.2 336.8 M675.5 356.8 L676.2 358.2 M681.6 362.2 L682.2 362.9 M690.3 364.2 L690.9 365.5 M697.0 361.5 L697.6 362.9 M701.7 364.2 L705.0 364.2 M781.1 315.4 L786.5 313.4 M863.3 316.1 L862.6 324.2 M777.0 340.5 L786.5 341.2 M726.7 343.9 L729.5 342.6 M726.7 363.4 L727.0 363.4 M760.7 358.9 L760.7 364.3 M802.8 370.4 L802.8 375.9 M809.6 371.8 L823.2 371.8 M830.0 371.8 L843.6 371.8 M813.0 377.2 L813.7 377.9 M781.1 394.9 L782.4 399.0 M806.9 398.3 L812.3 396.2 L816.4 399.6 M823.2 401.7 L828.6 400.3 L833.4 403.0 M842.9 404.4 L844.9 404.4 M499.3 318.4 L499.6 318.7 M539.3 319.2 L539.6 319.5 M547.3 317.6 L548.9 316.8"/>
<path stroke-width="4.5" stroke-dasharray="0.01 4.05" d="M478.1 25.4 L484.1 22.2 L512.2 22.4 M478.1 33.7 L522.9 31.0 M504.2 40.8 L504.2 51.5 M508.9 40.8 L508.9 51.5 M463.4 61.5 L463.4 67.6 M481.7 93.9 L498.8 93.9 M545.0 32.7 L546.4 32.7 M601.9 50.8 L610.6 50.8 M677.6 18.0 L677.6 32.7 M577.8 60.9 L577.8 74.2 M599.2 73.6 L610.0 73.6 M616.0 62.2 L656.8 62.2 M730.4 50.2 L743.8 50.2 M442.6 120.0 L441.3 127.4 M453.3 122.7 L453.3 128.1 M460.0 122.7 L460.0 128.1 M490.1 130.1 L504.9 130.1 M435.2 142.8 L435.2 212.4 M439.9 143.5 L439.9 212.4 M444.6 143.5 L444.6 181.6 M449.0 143.5 L449.0 181.6 M444.9 189.6 L444.9 212.4 M449.0 189.6 L449.0 212.4 M409.8 197.7 L413.2 194.3 M468.0 164.9 L468.7 168.2 M468.0 196.3 L468.0 200.4 M480.1 154.8 L492.1 154.8 M502.9 158.9 L502.9 167.6 M482.1 162.2 L489.5 162.2 M486.8 177.6 L494.8 177.6 M484.1 184.3 L484.8 184.3 M481.4 199.7 L497.5 199.7 M630.7 112.0 L630.7 121.4 M565.1 138.8 L565.8 160.9 M654.8 163.5 L655.5 165.5 M668.9 163.5 L669.5 165.5 M571.1 187.0 L571.1 197.0 M571.8 199.7 L572.5 208.4 M597.2 177.6 L601.9 177.6 M596.6 183.0 L601.9 183.0 M596.6 187.6 L601.9 187.6 M596.6 192.3 L601.9 192.3 M596.6 197.0 L603.3 197.7 M606.6 207.0 L612.0 207.0 M639.4 176.3 L647.4 175.6 M779.0 112.0 L779.0 117.4 M732.9 133.1 L732.9 137.1 M773.6 148.0 L773.6 148.7 M764.8 171.8 L786.5 171.1 M804.9 118.5 L806.9 118.5 M832.7 121.8 L834.1 121.8 M796.0 141.9 L796.7 143.9 M802.1 148.0 L806.2 148.0 M851.7 149.4 L852.0 149.8 M795.4 166.6 L796.0 166.6 M860.6 177.2 L860.6 183.3 M766.8 179.3 L770.2 182.0 M482.1 236.8 L502.2 236.8 M482.1 270.9 L502.2 270.9 M563.8 224.0 L564.2 224.3 M559.1 241.5 L589.9 239.4 M628.7 229.4 L628.7 240.1 M575.1 258.2 L612.6 258.6 M575.8 266.9 L612.6 266.6 M575.8 276.0 L613.3 275.2 M575.8 284.3 L603.3 284.3 M585.2 292.3 L612.0 292.1 M638.7 270.9 L642.1 274.9 M768.2 263.0 L768.9 268.4 M781.1 265.0 L781.1 267.0 M755.3 304.4 L756.6 306.4 M849.0 255.5 L850.4 258.2 M616.6 359.1 L616.9 359.4 M630.7 364.9 L631.4 364.9 M670.9 381.6 L686.3 385.6 M691.6 388.3 L705.0 392.3 M656.8 342.8 L663.5 344.8 M755.3 314.0 L756.6 314.7 M794.0 323.5 L859.9 322.9 M770.2 330.3 L775.7 330.3 M771.6 335.1 L775.7 339.2 M780.4 344.6 L782.4 344.6 M786.5 333.7 L786.8 333.7 M745.8 348.0 L747.1 348.4 M756.0 352.8 L756.0 354.1 M760.7 351.4 L768.9 352.1 M794.0 352.5 L858.5 352.1 L865.3 354.1 M732.2 362.5 L747.8 363.0 M756.0 359.6 L756.0 364.3 M768.2 357.5 L768.2 364.3 M812.3 362.0 L820.5 362.0 M825.9 362.0 L839.5 361.6 M857.2 362.0 L864.6 362.0 M821.2 377.2 L821.8 381.3 M831.4 375.9 L833.4 382.7 M842.2 375.9 L839.5 385.4 M851.1 370.4 L851.1 388.8 M716.5 393.9 L778.4 396.9 M791.3 394.2 L792.0 399.0 M429.0 314.4 L431.4 310.4 M437.7 311.2 L440.1 314.4 M464.9 321.6 L467.3 322.4 M481.7 326.4 L483.3 326.4 M500.1 324.0 L500.9 327.2 M508.9 318.4 L509.2 318.7 M536.1 325.6 L536.4 325.9 M546.5 324.8 L548.1 324.8 M558.5 313.9 L559.3 313.9 M564.8 314.4 L566.4 314.4 M564.8 321.6 L572.8 321.6 M564.8 327.2 L572.8 327.2"/>
<path stroke-width="3.8" d="M478.1 25.4 L484.1 22.2 L512.2 22.4 M478.1 33.7 L522.9 31.0 M504.2 40.8 L504.2 51.5 M508.9 40.8 L508.9 51.5 M463.4 61.5 L463.4 67.6 M481.7 93.9 L498.8 93.9 M545.0 32.7 L546.4 32.7 M601.9 50.8 L610.6 50.8 M677.6 18.0 L677.6 32.7 M577.8 60.9 L577.8 74.2 M599.2 73.6 L610.0 73.6 M616.0 62.2 L656.8 62.2 M730.4 50.2 L743.8 50.2 M442.6 120.0 L441.3 127.4 M453.3 122.7 L453.3 128.1 M460.0 122.7 L460.0 128.1 M490.1 130.1 L504.9 130.1 M435.2 142.8 L435.2 212.4 M439.9 143.5 L439.9 212.4 M444.6 143.5 L444.6 181.6 M449.0 143.5 L449.0 181.6 M444.9 189.6 L444.9 212.4 M449.0 189.6 L449.0 212.4 M409.8 197.7 L413.2 194.3 M468.0 164.9 L468.7 168.2 M468.0 196.3 L468.0 200.4 M480.1 154.8 L492.1 154.8 M502.9 158.9 L502.9 167.6 M482.1 162.2 L489.5 162.2 M486.8 177.6 L494.8 177.6 M484.1 184.3 L484.8 184.3 M481.4 199.7 L497.5 199.7 M630.7 112.0 L630.7 121.4 M565.1 138.8 L565.8 160.9 M654.8 163.5 L655.5 165.5 M668.9 163.5 L669.5 165.5 M571.1 187.0 L571.1 197.0 M571.8 199.7 L572.5 208.4 M597.2 177.6 L601.9 177.6 M596.6 183.0 L601.9 183.0 M596.6 187.6 L601.9 187.6 M596.6 192.3 L601.9 192.3 M596.6 197.0 L603.3 197.7 M606.6 207.0 L612.0 207.0 M639.4 176.3 L647.4 175.6 M779.0 112.0 L779.0 117.4 M732.9 133.1 L732.9 137.1 M773.6 148.0 L773.6 148.7 M764.8 171.8 L786.5 171.1 M804.9 118.5 L806.9 118.5 M832.7 121.8 L834.1 121.8 M796.0 141.9 L796.7 143.9 M802.1 148.0 L806.2 148.0 M851.7 149.4 L852.0 149.8 M795.4 166.6 L796.0 166.6 M860.6 177.2 L860.6 183.3 M766.8 179.3 L770.2 182.0 M482.1 236.8 L502.2 236.8 M482.1 270.9 L502.2 270.9 M563.8 224.0 L564.2 224.3 M559.1 241.5 L589.9 239.4 M628.7 229.4 L628.7 240.1 M575.1 258.2 L612.6 258.6 M575.8 266.9 L612.6 266.6 M575.8 276.0 L613.3 275.2 M575.8 284.3 L603.3 284.3 M585.2 292.3 L612.0 292.1 M638.7 270.9 L642.1 274.9 M768.2 263.0 L768.9 268.4 M781.1 265.0 L781.1 267.0 M755.3 304.4 L756.6 306.4 M849.0 255.5 L850.4 258.2 M616.6 359.1 L616.9 359.4 M630.7 364.9 L631.4 364.9 M670.9 381.6 L686.3 385.6 M691.6 388.3 L705.0 392.3 M656.8 342.8 L663.5 344.8 M755.3 314.0 L756.6 314.7 M794.0 323.5 L859.9 322.9 M770.2 330.3 L775.7 330.3 M771.6 335.1 L775.7 339.2 M780.4 344.6 L782.4 344.6 M786.5 333.7 L786.8 333.7 M745.8 348.0 L747.1 348.4 M756.0 352.8 L756.0 354.1 M760.7 351.4 L768.9 352.1 M794.0 352.5 L858.5 352.1 L865.3 354.1 M732.2 362.5 L747.8 363.0 M756.0 359.6 L756.0 364.3 M768.2 357.5 L768.2 364.3 M812.3 362.0 L820.5 362.0 M825.9 362.0 L839.5 361.6 M857.2 362.0 L864.6 362.0 M821.2 377.2 L821.8 381.3 M831.4 375.9 L833.4 382.7 M842.2 375.9 L839.5 385.4 M851.1 370.4 L851.1 388.8 M716.5 393.9 L778.4 396.9 M791.3 394.2 L792.0 399.0 M429.0 314.4 L431.4 310.4 M437.7 311.2 L440.1 314.4 M464.9 321.6 L467.3 322.4 M481.7 326.4 L483.3 326.4 M500.1 324.0 L500.9 327.2 M508.9 318.4 L509.2 318.7 M536.1 325.6 L536.4 325.9 M546.5 324.8 L548.1 324.8 M558.5 313.9 L559.3 313.9 M564.8 314.4 L566.4 314.4 M564.8 321.6 L572.8 321.6 M564.8 327.2 L572.8 327.2"/>
<path stroke="#3a5268" stroke-linecap="butt" stroke-width="1.1" stroke-dasharray="1.4 2.66" stroke-dashoffset="0.7" d="M478.1 25.4 L484.1 22.2 L512.2 22.4 M478.1 33.7 L522.9 31.0 M504.2 40.8 L504.2 51.5 M508.9 40.8 L508.9 51.5 M463.4 61.5 L463.4 67.6 M481.7 93.9 L498.8 93.9 M545.0 32.7 L546.4 32.7 M601.9 50.8 L610.6 50.8 M677.6 18.0 L677.6 32.7 M577.8 60.9 L577.8 74.2 M599.2 73.6 L610.0 73.6 M616.0 62.2 L656.8 62.2 M730.4 50.2 L743.8 50.2 M442.6 120.0 L441.3 127.4 M453.3 122.7 L453.3 128.1 M460.0 122.7 L460.0 128.1 M490.1 130.1 L504.9 130.1 M435.2 142.8 L435.2 212.4 M439.9 143.5 L439.9 212.4 M444.6 143.5 L444.6 181.6 M449.0 143.5 L449.0 181.6 M444.9 189.6 L444.9 212.4 M449.0 189.6 L449.0 212.4 M409.8 197.7 L413.2 194.3 M468.0 164.9 L468.7 168.2 M468.0 196.3 L468.0 200.4 M480.1 154.8 L492.1 154.8 M502.9 158.9 L502.9 167.6 M482.1 162.2 L489.5 162.2 M486.8 177.6 L494.8 177.6 M484.1 184.3 L484.8 184.3 M481.4 199.7 L497.5 199.7 M630.7 112.0 L630.7 121.4 M565.1 138.8 L565.8 160.9 M654.8 163.5 L655.5 165.5 M668.9 163.5 L669.5 165.5 M571.1 187.0 L571.1 197.0 M571.8 199.7 L572.5 208.4 M597.2 177.6 L601.9 177.6 M596.6 183.0 L601.9 183.0 M596.6 187.6 L601.9 187.6 M596.6 192.3 L601.9 192.3 M596.6 197.0 L603.3 197.7 M606.6 207.0 L612.0 207.0 M639.4 176.3 L647.4 175.6 M779.0 112.0 L779.0 117.4 M732.9 133.1 L732.9 137.1 M773.6 148.0 L773.6 148.7 M764.8 171.8 L786.5 171.1 M804.9 118.5 L806.9 118.5 M832.7 121.8 L834.1 121.8 M796.0 141.9 L796.7 143.9 M802.1 148.0 L806.2 148.0 M851.7 149.4 L852.0 149.8 M795.4 166.6 L796.0 166.6 M860.6 177.2 L860.6 183.3 M766.8 179.3 L770.2 182.0 M482.1 236.8 L502.2 236.8 M482.1 270.9 L502.2 270.9 M563.8 224.0 L564.2 224.3 M559.1 241.5 L589.9 239.4 M628.7 229.4 L628.7 240.1 M575.1 258.2 L612.6 258.6 M575.8 266.9 L612.6 266.6 M575.8 276.0 L613.3 275.2 M575.8 284.3 L603.3 284.3 M585.2 292.3 L612.0 292.1 M638.7 270.9 L642.1 274.9 M768.2 263.0 L768.9 268.4 M781.1 265.0 L781.1 267.0 M755.3 304.4 L756.6 306.4 M849.0 255.5 L850.4 258.2 M616.6 359.1 L616.9 359.4 M630.7 364.9 L631.4 364.9 M670.9 381.6 L686.3 385.6 M691.6 388.3 L705.0 392.3 M656.8 342.8 L663.5 344.8 M755.3 314.0 L756.6 314.7 M794.0 323.5 L859.9 322.9 M770.2 330.3 L775.7 330.3 M771.6 335.1 L775.7 339.2 M780.4 344.6 L782.4 344.6 M786.5 333.7 L786.8 333.7 M745.8 348.0 L747.1 348.4 M756.0 352.8 L756.0 354.1 M760.7 351.4 L768.9 352.1 M794.0 352.5 L858.5 352.1 L865.3 354.1 M732.2 362.5 L747.8 363.0 M756.0 359.6 L756.0 364.3 M768.2 357.5 L768.2 364.3 M812.3 362.0 L820.5 362.0 M825.9 362.0 L839.5 361.6 M857.2 362.0 L864.6 362.0 M821.2 377.2 L821.8 381.3 M831.4 375.9 L833.4 382.7 M842.2 375.9 L839.5 385.4 M851.1 370.4 L851.1 388.8 M716.5 393.9 L778.4 396.9 M791.3 394.2 L792.0 399.0 M429.0 314.4 L431.4 310.4 M437.7 311.2 L440.1 314.4 M464.9 321.6 L467.3 322.4 M481.7 326.4 L483.3 326.4 M500.1 324.0 L500.9 327.2 M508.9 318.4 L509.2 318.7 M536.1 325.6 L536.4 325.9 M546.5 324.8 L548.1 324.8 M558.5 313.9 L559.3 313.9 M564.8 314.4 L566.4 314.4 M564.8 321.6 L572.8 321.6 M564.8 327.2 L572.8 327.2"/>
<path stroke-width="5.0" stroke-dasharray="0.01 4.50" d="M399.8 21.6 L433.2 21.6 M399.8 29.8 L433.2 29.8 M399.8 37.0 L433.2 37.0 M399.8 45.5 L433.2 45.5 M399.8 52.2 L433.2 52.2 M440.6 19.4 L440.6 53.8 M446.6 53.8 L446.6 24.7 L449.6 21.4 L472.7 21.4 M454.9 29.4 L472.7 29.4 M454.9 37.0 L472.7 37.0 M454.9 45.1 L472.7 45.1 M454.9 51.8 L472.7 51.8 M400.7 63.5 L448.0 63.0 L460.0 65.5 M515.2 62.2 L539.0 62.2 M516.9 70.9 L519.6 68.9 L539.0 68.4 M516.9 74.9 L520.3 77.6 L539.0 77.1 M516.9 85.9 L539.0 84.6 M516.9 91.0 L520.3 93.1 L539.0 93.1 M517.8 100.4 L539.0 99.8 M516.5 107.9 L539.0 108.5 M539.0 21.4 L548.4 21.4 M563.8 19.4 L563.8 34.1 M583.8 24.7 L585.2 33.4 M598.2 18.7 L598.2 32.1 M608.6 19.4 L608.6 45.5 M575.8 50.8 L596.6 50.8 M671.5 17.4 L671.5 32.7 M686.3 17.4 L686.3 32.7 M691.6 17.4 L691.6 32.7 M640.1 40.8 L705.0 40.8 M644.1 50.2 L705.0 50.8 M539.0 68.9 L549.7 68.9 M540.3 76.3 L540.3 112.4 M571.1 105.7 L571.1 112.4 M571.8 63.5 L572.5 63.5 M597.9 59.5 L597.9 69.6 M599.2 78.9 L611.3 78.9 M597.9 111.1 L610.0 111.1 M617.3 67.6 L632.7 67.6 M617.3 72.9 L632.7 72.9 M617.3 78.9 L632.7 78.9 M617.3 85.0 L622.0 85.0 M617.3 99.0 L624.7 99.0 M617.3 105.7 L624.7 105.7 M675.5 60.2 L675.5 92.3 M681.2 60.2 L680.2 92.3 M686.5 60.2 L686.9 92.3 M699.2 61.5 L699.2 87.0 M672.9 97.7 L686.3 97.7 M659.5 105.7 L672.9 104.4 M684.9 104.4 L684.9 112.4 M694.3 105.7 L703.7 104.4 M707.0 17.4 L707.0 32.1 M730.4 18.7 L780.0 18.7 M730.4 33.4 L769.3 33.4 M729.8 42.1 L749.2 42.1 M801.4 60.2 L801.4 68.2 M798.7 81.6 L801.4 85.6 M820.1 64.2 L825.5 64.2 M820.1 68.9 L825.5 68.9 M726.4 97.7 L788.0 97.7 M706.3 97.7 L706.3 112.4 M426.5 118.7 L421.9 127.4 M434.6 120.0 L434.6 127.4 M520.3 125.4 L539.0 124.7 M518.9 132.1 L539.0 132.1 M517.6 139.4 L539.0 139.4 M517.6 147.5 L539.0 146.8 M521.6 155.5 L539.0 155.5 M524.3 162.2 L539.0 162.2 M433.2 138.1 L453.3 137.4 M453.3 142.8 L453.3 184.3 M460.0 144.1 L460.0 212.4 M428.6 168.2 L428.6 191.0 M401.8 202.4 L405.1 205.7 L407.8 207.0 M466.7 150.8 L473.4 150.2 M468.0 176.3 L469.4 180.3 M482.8 168.9 L483.4 169.6 M540.3 112.0 L540.3 165.5 M596.6 112.0 L596.6 121.4 M605.9 128.7 L631.4 128.7 M648.8 112.0 L652.8 112.0 M671.5 124.0 L679.6 123.4 M694.3 130.1 L705.0 129.4 M561.1 139.4 L562.4 161.5 M589.9 146.8 L589.9 156.2 M618.0 167.6 L647.4 167.6 M680.9 150.2 L688.9 150.8 M653.5 170.9 L703.0 170.2 M656.1 206.4 L677.6 206.4 M681.6 178.9 L682.9 187.0 M706.4 112.0 L706.4 120.2 M753.2 112.0 L775.7 112.0 M785.8 143.2 L785.8 150.7 M794.0 119.5 L798.1 121.5 M843.6 121.8 L843.6 122.6 M754.6 175.2 L762.1 175.2 M764.1 188.1 L764.1 199.0 M794.0 178.6 L794.0 190.8 M773.6 194.9 L774.3 198.3 M813.0 178.6 L813.0 186.0 M817.8 185.4 L825.9 185.4 M738.3 204.4 L739.6 207.1 M411.8 246.1 L431.9 245.5 M411.8 254.8 L430.6 254.8 M413.2 256.2 L413.2 274.9 L429.2 283.6 M429.9 256.2 L429.9 281.6 M439.3 274.9 L462.0 274.2 M439.3 274.9 L438.6 281.6 L437.3 287.0 L449.3 289.6 L461.4 289.4 L461.4 274.9 M588.5 222.7 L588.8 223.4 M620.0 234.1 L620.0 292.3 M558.4 249.9 L569.1 249.9 M560.4 252.2 L560.4 287.0 M567.8 252.2 L567.8 286.3 M575.8 250.2 L581.8 250.2 M571.8 300.4 L579.2 303.0 L596.6 302.4 M603.3 301.7 L619.3 301.0 L626.0 298.3 M649.4 242.1 L650.1 258.9 M659.5 288.3 L663.5 288.3 M636.7 297.0 L670.2 297.0 M636.7 303.7 L670.2 303.7 M675.5 296.3 L705.0 296.3 M675.5 303.7 L705.0 303.7 M705.0 243.9 L709.1 243.9 M705.0 263.6 L709.1 263.6 M715.9 261.6 L715.9 269.1 M721.3 261.6 L721.3 269.1 M705.0 270.4 L709.1 270.4 M705.0 275.9 L709.1 275.9 M705.0 294.9 L709.1 294.9 M705.0 302.4 L709.1 302.4 M705.0 309.8 L709.1 309.8 M757.3 255.9 L786.5 255.5 M759.3 265.7 L760.0 266.3 M780.4 303.3 L786.5 303.3 M565.8 321.4 L571.1 321.4 M590.5 338.1 L597.9 345.5 M636.1 364.9 L643.4 364.5 M646.1 374.2 L667.5 375.6 M620.7 316.0 L630.0 323.4 M636.1 312.7 L669.5 312.7 M636.7 318.0 L669.5 318.0 M683.6 312.7 L705.0 312.7 M683.6 318.0 L705.0 318.0 M638.1 325.4 L638.1 332.1 M642.7 326.1 L669.5 326.1 M642.7 332.1 L651.4 338.8 M668.2 331.4 L668.2 348.1 M676.2 333.4 L705.0 332.7 M757.3 334.4 L757.3 335.1 M764.8 333.7 L766.1 333.7 M794.0 333.5 L835.4 332.7 M794.0 343.9 L821.8 343.5 M832.7 343.2 L857.2 343.0 M445.7 314.0 L475.3 313.6 M471.3 320.0 L471.3 326.4 M492.1 326.4 L492.9 326.4 M508.9 326.4 L513.7 326.4 M520.9 318.4 L520.1 327.2 M559.3 321.6 L559.3 327.2"/>
<path stroke-width="4.2" d="M399.8 21.6 L433.2 21.6 M399.8 29.8 L433.2 29.8 M399.8 37.0 L433.2 37.0 M399.8 45.5 L433.2 45.5 M399.8 52.2 L433.2 52.2 M440.6 19.4 L440.6 53.8 M446.6 53.8 L446.6 24.7 L449.6 21.4 L472.7 21.4 M454.9 29.4 L472.7 29.4 M454.9 37.0 L472.7 37.0 M454.9 45.1 L472.7 45.1 M454.9 51.8 L472.7 51.8 M400.7 63.5 L448.0 63.0 L460.0 65.5 M515.2 62.2 L539.0 62.2 M516.9 70.9 L519.6 68.9 L539.0 68.4 M516.9 74.9 L520.3 77.6 L539.0 77.1 M516.9 85.9 L539.0 84.6 M516.9 91.0 L520.3 93.1 L539.0 93.1 M517.8 100.4 L539.0 99.8 M516.5 107.9 L539.0 108.5 M539.0 21.4 L548.4 21.4 M563.8 19.4 L563.8 34.1 M583.8 24.7 L585.2 33.4 M598.2 18.7 L598.2 32.1 M608.6 19.4 L608.6 45.5 M575.8 50.8 L596.6 50.8 M671.5 17.4 L671.5 32.7 M686.3 17.4 L686.3 32.7 M691.6 17.4 L691.6 32.7 M640.1 40.8 L705.0 40.8 M644.1 50.2 L705.0 50.8 M539.0 68.9 L549.7 68.9 M540.3 76.3 L540.3 112.4 M571.1 105.7 L571.1 112.4 M571.8 63.5 L572.5 63.5 M597.9 59.5 L597.9 69.6 M599.2 78.9 L611.3 78.9 M597.9 111.1 L610.0 111.1 M617.3 67.6 L632.7 67.6 M617.3 72.9 L632.7 72.9 M617.3 78.9 L632.7 78.9 M617.3 85.0 L622.0 85.0 M617.3 99.0 L624.7 99.0 M617.3 105.7 L624.7 105.7 M675.5 60.2 L675.5 92.3 M681.2 60.2 L680.2 92.3 M686.5 60.2 L686.9 92.3 M699.2 61.5 L699.2 87.0 M672.9 97.7 L686.3 97.7 M659.5 105.7 L672.9 104.4 M684.9 104.4 L684.9 112.4 M694.3 105.7 L703.7 104.4 M707.0 17.4 L707.0 32.1 M730.4 18.7 L780.0 18.7 M730.4 33.4 L769.3 33.4 M729.8 42.1 L749.2 42.1 M801.4 60.2 L801.4 68.2 M798.7 81.6 L801.4 85.6 M820.1 64.2 L825.5 64.2 M820.1 68.9 L825.5 68.9 M726.4 97.7 L788.0 97.7 M706.3 97.7 L706.3 112.4 M426.5 118.7 L421.9 127.4 M434.6 120.0 L434.6 127.4 M520.3 125.4 L539.0 124.7 M518.9 132.1 L539.0 132.1 M517.6 139.4 L539.0 139.4 M517.6 147.5 L539.0 146.8 M521.6 155.5 L539.0 155.5 M524.3 162.2 L539.0 162.2 M433.2 138.1 L453.3 137.4 M453.3 142.8 L453.3 184.3 M460.0 144.1 L460.0 212.4 M428.6 168.2 L428.6 191.0 M401.8 202.4 L405.1 205.7 L407.8 207.0 M466.7 150.8 L473.4 150.2 M468.0 176.3 L469.4 180.3 M482.8 168.9 L483.4 169.6 M540.3 112.0 L540.3 165.5 M596.6 112.0 L596.6 121.4 M605.9 128.7 L631.4 128.7 M648.8 112.0 L652.8 112.0 M671.5 124.0 L679.6 123.4 M694.3 130.1 L705.0 129.4 M561.1 139.4 L562.4 161.5 M589.9 146.8 L589.9 156.2 M618.0 167.6 L647.4 167.6 M680.9 150.2 L688.9 150.8 M653.5 170.9 L703.0 170.2 M656.1 206.4 L677.6 206.4 M681.6 178.9 L682.9 187.0 M706.4 112.0 L706.4 120.2 M753.2 112.0 L775.7 112.0 M785.8 143.2 L785.8 150.7 M794.0 119.5 L798.1 121.5 M843.6 121.8 L843.6 122.6 M754.6 175.2 L762.1 175.2 M764.1 188.1 L764.1 199.0 M794.0 178.6 L794.0 190.8 M773.6 194.9 L774.3 198.3 M813.0 178.6 L813.0 186.0 M817.8 185.4 L825.9 185.4 M738.3 204.4 L739.6 207.1 M411.8 246.1 L431.9 245.5 M411.8 254.8 L430.6 254.8 M413.2 256.2 L413.2 274.9 L429.2 283.6 M429.9 256.2 L429.9 281.6 M439.3 274.9 L462.0 274.2 M439.3 274.9 L438.6 281.6 L437.3 287.0 L449.3 289.6 L461.4 289.4 L461.4 274.9 M588.5 222.7 L588.8 223.4 M620.0 234.1 L620.0 292.3 M558.4 249.9 L569.1 249.9 M560.4 252.2 L560.4 287.0 M567.8 252.2 L567.8 286.3 M575.8 250.2 L581.8 250.2 M571.8 300.4 L579.2 303.0 L596.6 302.4 M603.3 301.7 L619.3 301.0 L626.0 298.3 M649.4 242.1 L650.1 258.9 M659.5 288.3 L663.5 288.3 M636.7 297.0 L670.2 297.0 M636.7 303.7 L670.2 303.7 M675.5 296.3 L705.0 296.3 M675.5 303.7 L705.0 303.7 M705.0 243.9 L709.1 243.9 M705.0 263.6 L709.1 263.6 M715.9 261.6 L715.9 269.1 M721.3 261.6 L721.3 269.1 M705.0 270.4 L709.1 270.4 M705.0 275.9 L709.1 275.9 M705.0 294.9 L709.1 294.9 M705.0 302.4 L709.1 302.4 M705.0 309.8 L709.1 309.8 M757.3 255.9 L786.5 255.5 M759.3 265.7 L760.0 266.3 M780.4 303.3 L786.5 303.3 M565.8 321.4 L571.1 321.4 M590.5 338.1 L597.9 345.5 M636.1 364.9 L643.4 364.5 M646.1 374.2 L667.5 375.6 M620.7 316.0 L630.0 323.4 M636.1 312.7 L669.5 312.7 M636.7 318.0 L669.5 318.0 M683.6 312.7 L705.0 312.7 M683.6 318.0 L705.0 318.0 M638.1 325.4 L638.1 332.1 M642.7 326.1 L669.5 326.1 M642.7 332.1 L651.4 338.8 M668.2 331.4 L668.2 348.1 M676.2 333.4 L705.0 332.7 M757.3 334.4 L757.3 335.1 M764.8 333.7 L766.1 333.7 M794.0 333.5 L835.4 332.7 M794.0 343.9 L821.8 343.5 M832.7 343.2 L857.2 343.0 M445.7 314.0 L475.3 313.6 M471.3 320.0 L471.3 326.4 M492.1 326.4 L492.9 326.4 M508.9 326.4 L513.7 326.4 M520.9 318.4 L520.1 327.2 M559.3 321.6 L559.3 327.2"/>
<path stroke="#3a5268" stroke-linecap="butt" stroke-width="1.2" stroke-dasharray="1.4 3.11" stroke-dashoffset="0.7" d="M399.8 21.6 L433.2 21.6 M399.8 29.8 L433.2 29.8 M399.8 37.0 L433.2 37.0 M399.8 45.5 L433.2 45.5 M399.8 52.2 L433.2 52.2 M440.6 19.4 L440.6 53.8 M446.6 53.8 L446.6 24.7 L449.6 21.4 L472.7 21.4 M454.9 29.4 L472.7 29.4 M454.9 37.0 L472.7 37.0 M454.9 45.1 L472.7 45.1 M454.9 51.8 L472.7 51.8 M400.7 63.5 L448.0 63.0 L460.0 65.5 M515.2 62.2 L539.0 62.2 M516.9 70.9 L519.6 68.9 L539.0 68.4 M516.9 74.9 L520.3 77.6 L539.0 77.1 M516.9 85.9 L539.0 84.6 M516.9 91.0 L520.3 93.1 L539.0 93.1 M517.8 100.4 L539.0 99.8 M516.5 107.9 L539.0 108.5 M539.0 21.4 L548.4 21.4 M563.8 19.4 L563.8 34.1 M583.8 24.7 L585.2 33.4 M598.2 18.7 L598.2 32.1 M608.6 19.4 L608.6 45.5 M575.8 50.8 L596.6 50.8 M671.5 17.4 L671.5 32.7 M686.3 17.4 L686.3 32.7 M691.6 17.4 L691.6 32.7 M640.1 40.8 L705.0 40.8 M644.1 50.2 L705.0 50.8 M539.0 68.9 L549.7 68.9 M540.3 76.3 L540.3 112.4 M571.1 105.7 L571.1 112.4 M571.8 63.5 L572.5 63.5 M597.9 59.5 L597.9 69.6 M599.2 78.9 L611.3 78.9 M597.9 111.1 L610.0 111.1 M617.3 67.6 L632.7 67.6 M617.3 72.9 L632.7 72.9 M617.3 78.9 L632.7 78.9 M617.3 85.0 L622.0 85.0 M617.3 99.0 L624.7 99.0 M617.3 105.7 L624.7 105.7 M675.5 60.2 L675.5 92.3 M681.2 60.2 L680.2 92.3 M686.5 60.2 L686.9 92.3 M699.2 61.5 L699.2 87.0 M672.9 97.7 L686.3 97.7 M659.5 105.7 L672.9 104.4 M684.9 104.4 L684.9 112.4 M694.3 105.7 L703.7 104.4 M707.0 17.4 L707.0 32.1 M730.4 18.7 L780.0 18.7 M730.4 33.4 L769.3 33.4 M729.8 42.1 L749.2 42.1 M801.4 60.2 L801.4 68.2 M798.7 81.6 L801.4 85.6 M820.1 64.2 L825.5 64.2 M820.1 68.9 L825.5 68.9 M726.4 97.7 L788.0 97.7 M706.3 97.7 L706.3 112.4 M426.5 118.7 L421.9 127.4 M434.6 120.0 L434.6 127.4 M520.3 125.4 L539.0 124.7 M518.9 132.1 L539.0 132.1 M517.6 139.4 L539.0 139.4 M517.6 147.5 L539.0 146.8 M521.6 155.5 L539.0 155.5 M524.3 162.2 L539.0 162.2 M433.2 138.1 L453.3 137.4 M453.3 142.8 L453.3 184.3 M460.0 144.1 L460.0 212.4 M428.6 168.2 L428.6 191.0 M401.8 202.4 L405.1 205.7 L407.8 207.0 M466.7 150.8 L473.4 150.2 M468.0 176.3 L469.4 180.3 M482.8 168.9 L483.4 169.6 M540.3 112.0 L540.3 165.5 M596.6 112.0 L596.6 121.4 M605.9 128.7 L631.4 128.7 M648.8 112.0 L652.8 112.0 M671.5 124.0 L679.6 123.4 M694.3 130.1 L705.0 129.4 M561.1 139.4 L562.4 161.5 M589.9 146.8 L589.9 156.2 M618.0 167.6 L647.4 167.6 M680.9 150.2 L688.9 150.8 M653.5 170.9 L703.0 170.2 M656.1 206.4 L677.6 206.4 M681.6 178.9 L682.9 187.0 M706.4 112.0 L706.4 120.2 M753.2 112.0 L775.7 112.0 M785.8 143.2 L785.8 150.7 M794.0 119.5 L798.1 121.5 M843.6 121.8 L843.6 122.6 M754.6 175.2 L762.1 175.2 M764.1 188.1 L764.1 199.0 M794.0 178.6 L794.0 190.8 M773.6 194.9 L774.3 198.3 M813.0 178.6 L813.0 186.0 M817.8 185.4 L825.9 185.4 M738.3 204.4 L739.6 207.1 M411.8 246.1 L431.9 245.5 M411.8 254.8 L430.6 254.8 M413.2 256.2 L413.2 274.9 L429.2 283.6 M429.9 256.2 L429.9 281.6 M439.3 274.9 L462.0 274.2 M439.3 274.9 L438.6 281.6 L437.3 287.0 L449.3 289.6 L461.4 289.4 L461.4 274.9 M588.5 222.7 L588.8 223.4 M620.0 234.1 L620.0 292.3 M558.4 249.9 L569.1 249.9 M560.4 252.2 L560.4 287.0 M567.8 252.2 L567.8 286.3 M575.8 250.2 L581.8 250.2 M571.8 300.4 L579.2 303.0 L596.6 302.4 M603.3 301.7 L619.3 301.0 L626.0 298.3 M649.4 242.1 L650.1 258.9 M659.5 288.3 L663.5 288.3 M636.7 297.0 L670.2 297.0 M636.7 303.7 L670.2 303.7 M675.5 296.3 L705.0 296.3 M675.5 303.7 L705.0 303.7 M705.0 243.9 L709.1 243.9 M705.0 263.6 L709.1 263.6 M715.9 261.6 L715.9 269.1 M721.3 261.6 L721.3 269.1 M705.0 270.4 L709.1 270.4 M705.0 275.9 L709.1 275.9 M705.0 294.9 L709.1 294.9 M705.0 302.4 L709.1 302.4 M705.0 309.8 L709.1 309.8 M757.3 255.9 L786.5 255.5 M759.3 265.7 L760.0 266.3 M780.4 303.3 L786.5 303.3 M565.8 321.4 L571.1 321.4 M590.5 338.1 L597.9 345.5 M636.1 364.9 L643.4 364.5 M646.1 374.2 L667.5 375.6 M620.7 316.0 L630.0 323.4 M636.1 312.7 L669.5 312.7 M636.7 318.0 L669.5 318.0 M683.6 312.7 L705.0 312.7 M683.6 318.0 L705.0 318.0 M638.1 325.4 L638.1 332.1 M642.7 326.1 L669.5 326.1 M642.7 332.1 L651.4 338.8 M668.2 331.4 L668.2 348.1 M676.2 333.4 L705.0 332.7 M757.3 334.4 L757.3 335.1 M764.8 333.7 L766.1 333.7 M794.0 333.5 L835.4 332.7 M794.0 343.9 L821.8 343.5 M832.7 343.2 L857.2 343.0 M445.7 314.0 L475.3 313.6 M471.3 320.0 L471.3 326.4 M492.1 326.4 L492.9 326.4 M508.9 326.4 L513.7 326.4 M520.9 318.4 L520.1 327.2 M559.3 321.6 L559.3 327.2"/>
<path stroke-width="5.5" stroke-dasharray="0.01 4.95" d="M400.7 71.0 L448.0 70.8 L465.4 73.6 M400.7 78.7 L448.0 78.4 L465.4 81.6 M400.7 86.7 L448.0 86.2 L465.4 89.6 M471.4 60.9 L471.4 112.4 M557.7 19.4 L557.7 33.4 M569.8 19.4 L569.8 33.4 M592.3 18.7 L592.3 33.4 M576.5 39.4 L597.9 39.4 M576.5 44.1 L597.9 44.1 M539.0 62.2 L549.7 62.2 M548.4 77.6 L548.4 112.4 M559.1 99.7 L573.8 99.7 M607.3 59.5 L607.3 69.6 M655.2 65.5 L655.5 105.7 M667.8 60.2 L667.8 95.0 M692.9 60.2 L692.9 85.6 M731.1 106.4 L746.5 106.4 M717.7 95.0 L717.7 112.4 M517.6 117.4 L533.6 116.0 M518.9 171.6 L539.0 170.9 M428.6 140.8 L428.6 160.9 M453.3 189.6 L453.3 211.1 M548.4 112.0 L548.4 164.2 M635.4 122.0 L644.8 114.7 M686.3 112.0 L686.3 129.4 M561.8 168.2 L562.4 168.9 M569.1 167.6 L569.8 168.2 M672.9 138.8 L672.9 165.5 M680.9 139.4 L680.9 150.8 M542.3 170.9 L547.7 170.9 M656.8 179.6 L676.9 179.6 M656.8 185.0 L676.9 185.0 M656.8 190.3 L676.9 190.3 M656.8 195.7 L676.9 195.7 M656.8 201.0 L676.9 201.0 M760.7 128.3 L786.5 128.0 M764.8 137.1 L785.8 137.1 M766.8 142.6 L766.8 148.0 M754.6 156.6 L786.5 156.6 M756.0 163.6 L756.6 168.4 M812.3 116.1 L812.3 148.0 M812.3 157.5 L812.3 165.0 M754.6 181.3 L762.1 181.3 M754.6 186.7 L759.3 186.7 M754.6 192.8 L759.3 192.8 M754.6 199.0 L759.3 199.0 M754.6 205.1 L762.1 205.1 M774.3 184.7 L790.6 184.0 M777.0 190.1 L789.2 190.1 M775.7 176.5 L785.2 176.5 M807.6 178.6 L807.6 192.2 M403.1 244.8 L403.1 276.3 M470.7 274.2 L470.7 292.3 M582.5 219.4 L582.5 226.7 M628.7 248.1 L628.7 288.3 M636.1 239.4 L644.8 239.4 M636.1 248.1 L643.4 248.1 M636.1 253.5 L643.4 253.5 M636.1 261.5 L648.8 258.9 M715.2 285.4 L748.5 285.4 M754.6 293.5 L775.7 293.5 L782.4 290.8 M770.2 300.3 L770.2 308.5 M794.7 270.4 L794.7 290.1 M794.0 263.4 L834.1 263.4 M838.8 263.4 L854.5 262.5 M860.6 254.1 L860.6 270.4 M809.6 294.2 L854.5 293.9 M794.0 302.8 L859.9 302.4 M861.2 278.6 L861.2 299.0 M564.4 327.4 L589.9 326.7 L601.9 336.1 L614.0 346.8 L624.7 353.5 L630.0 358.9 M599.9 313.3 L630.0 333.4 M636.1 340.8 L654.1 350.8 L667.5 356.2 M675.5 326.7 L705.0 326.7 M676.2 348.1 L705.0 347.5 M686.3 357.5 L705.0 356.2 M794.0 314.0 L854.5 314.0"/>
<path stroke-width="4.6" d="M400.7 71.0 L448.0 70.8 L465.4 73.6 M400.7 78.7 L448.0 78.4 L465.4 81.6 M400.7 86.7 L448.0 86.2 L465.4 89.6 M471.4 60.9 L471.4 112.4 M557.7 19.4 L557.7 33.4 M569.8 19.4 L569.8 33.4 M592.3 18.7 L592.3 33.4 M576.5 39.4 L597.9 39.4 M576.5 44.1 L597.9 44.1 M539.0 62.2 L549.7 62.2 M548.4 77.6 L548.4 112.4 M559.1 99.7 L573.8 99.7 M607.3 59.5 L607.3 69.6 M655.2 65.5 L655.5 105.7 M667.8 60.2 L667.8 95.0 M692.9 60.2 L692.9 85.6 M731.1 106.4 L746.5 106.4 M717.7 95.0 L717.7 112.4 M517.6 117.4 L533.6 116.0 M518.9 171.6 L539.0 170.9 M428.6 140.8 L428.6 160.9 M453.3 189.6 L453.3 211.1 M548.4 112.0 L548.4 164.2 M635.4 122.0 L644.8 114.7 M686.3 112.0 L686.3 129.4 M561.8 168.2 L562.4 168.9 M569.1 167.6 L569.8 168.2 M672.9 138.8 L672.9 165.5 M680.9 139.4 L680.9 150.8 M542.3 170.9 L547.7 170.9 M656.8 179.6 L676.9 179.6 M656.8 185.0 L676.9 185.0 M656.8 190.3 L676.9 190.3 M656.8 195.7 L676.9 195.7 M656.8 201.0 L676.9 201.0 M760.7 128.3 L786.5 128.0 M764.8 137.1 L785.8 137.1 M766.8 142.6 L766.8 148.0 M754.6 156.6 L786.5 156.6 M756.0 163.6 L756.6 168.4 M812.3 116.1 L812.3 148.0 M812.3 157.5 L812.3 165.0 M754.6 181.3 L762.1 181.3 M754.6 186.7 L759.3 186.7 M754.6 192.8 L759.3 192.8 M754.6 199.0 L759.3 199.0 M754.6 205.1 L762.1 205.1 M774.3 184.7 L790.6 184.0 M777.0 190.1 L789.2 190.1 M775.7 176.5 L785.2 176.5 M807.6 178.6 L807.6 192.2 M403.1 244.8 L403.1 276.3 M470.7 274.2 L470.7 292.3 M582.5 219.4 L582.5 226.7 M628.7 248.1 L628.7 288.3 M636.1 239.4 L644.8 239.4 M636.1 248.1 L643.4 248.1 M636.1 253.5 L643.4 253.5 M636.1 261.5 L648.8 258.9 M715.2 285.4 L748.5 285.4 M754.6 293.5 L775.7 293.5 L782.4 290.8 M770.2 300.3 L770.2 308.5 M794.7 270.4 L794.7 290.1 M794.0 263.4 L834.1 263.4 M838.8 263.4 L854.5 262.5 M860.6 254.1 L860.6 270.4 M809.6 294.2 L854.5 293.9 M794.0 302.8 L859.9 302.4 M861.2 278.6 L861.2 299.0 M564.4 327.4 L589.9 326.7 L601.9 336.1 L614.0 346.8 L624.7 353.5 L630.0 358.9 M599.9 313.3 L630.0 333.4 M636.1 340.8 L654.1 350.8 L667.5 356.2 M675.5 326.7 L705.0 326.7 M676.2 348.1 L705.0 347.5 M686.3 357.5 L705.0 356.2 M794.0 314.0 L854.5 314.0"/>
<path stroke="#3a5268" stroke-linecap="butt" stroke-width="1.3" stroke-dasharray="1.4 3.56" stroke-dashoffset="0.7" d="M400.7 71.0 L448.0 70.8 L465.4 73.6 M400.7 78.7 L448.0 78.4 L465.4 81.6 M400.7 86.7 L448.0 86.2 L465.4 89.6 M471.4 60.9 L471.4 112.4 M557.7 19.4 L557.7 33.4 M569.8 19.4 L569.8 33.4 M592.3 18.7 L592.3 33.4 M576.5 39.4 L597.9 39.4 M576.5 44.1 L597.9 44.1 M539.0 62.2 L549.7 62.2 M548.4 77.6 L548.4 112.4 M559.1 99.7 L573.8 99.7 M607.3 59.5 L607.3 69.6 M655.2 65.5 L655.5 105.7 M667.8 60.2 L667.8 95.0 M692.9 60.2 L692.9 85.6 M731.1 106.4 L746.5 106.4 M717.7 95.0 L717.7 112.4 M517.6 117.4 L533.6 116.0 M518.9 171.6 L539.0 170.9 M428.6 140.8 L428.6 160.9 M453.3 189.6 L453.3 211.1 M548.4 112.0 L548.4 164.2 M635.4 122.0 L644.8 114.7 M686.3 112.0 L686.3 129.4 M561.8 168.2 L562.4 168.9 M569.1 167.6 L569.8 168.2 M672.9 138.8 L672.9 165.5 M680.9 139.4 L680.9 150.8 M542.3 170.9 L547.7 170.9 M656.8 179.6 L676.9 179.6 M656.8 185.0 L676.9 185.0 M656.8 190.3 L676.9 190.3 M656.8 195.7 L676.9 195.7 M656.8 201.0 L676.9 201.0 M760.7 128.3 L786.5 128.0 M764.8 137.1 L785.8 137.1 M766.8 142.6 L766.8 148.0 M754.6 156.6 L786.5 156.6 M756.0 163.6 L756.6 168.4 M812.3 116.1 L812.3 148.0 M812.3 157.5 L812.3 165.0 M754.6 181.3 L762.1 181.3 M754.6 186.7 L759.3 186.7 M754.6 192.8 L759.3 192.8 M754.6 199.0 L759.3 199.0 M754.6 205.1 L762.1 205.1 M774.3 184.7 L790.6 184.0 M777.0 190.1 L789.2 190.1 M775.7 176.5 L785.2 176.5 M807.6 178.6 L807.6 192.2 M403.1 244.8 L403.1 276.3 M470.7 274.2 L470.7 292.3 M582.5 219.4 L582.5 226.7 M628.7 248.1 L628.7 288.3 M636.1 239.4 L644.8 239.4 M636.1 248.1 L643.4 248.1 M636.1 253.5 L643.4 253.5 M636.1 261.5 L648.8 258.9 M715.2 285.4 L748.5 285.4 M754.6 293.5 L775.7 293.5 L782.4 290.8 M770.2 300.3 L770.2 308.5 M794.7 270.4 L794.7 290.1 M794.0 263.4 L834.1 263.4 M838.8 263.4 L854.5 262.5 M860.6 254.1 L860.6 270.4 M809.6 294.2 L854.5 293.9 M794.0 302.8 L859.9 302.4 M861.2 278.6 L861.2 299.0 M564.4 327.4 L589.9 326.7 L601.9 336.1 L614.0 346.8 L624.7 353.5 L630.0 358.9 M599.9 313.3 L630.0 333.4 M636.1 340.8 L654.1 350.8 L667.5 356.2 M675.5 326.7 L705.0 326.7 M676.2 348.1 L705.0 347.5 M686.3 357.5 L705.0 356.2 M794.0 314.0 L854.5 314.0"/>
<path stroke-width="6.0" stroke-dasharray="0.01 5.40" d="M400.7 94.6 L448.0 93.9 L465.4 97.3 M400.7 102.6 L448.0 102.0 L465.4 105.0 M400.7 110.1 L448.0 109.5 L465.4 112.4 M604.3 19.4 L604.3 45.5 M619.3 92.3 L624.7 92.3 M635.4 64.9 L635.4 112.4 M642.1 65.5 L642.1 112.4 M648.5 65.5 L649.8 105.7 M661.5 61.5 L661.5 99.0 M723.1 18.0 L723.1 51.5 M731.1 26.7 L774.6 26.7 M711.7 97.7 L711.7 112.4 M407.8 118.0 L426.5 118.7 M431.9 118.7 L445.3 118.7 M452.0 120.7 L464.0 120.7 M428.6 195.0 L428.6 208.4 M603.3 121.4 L624.7 121.4 M698.3 124.0 L705.0 124.0 M569.1 138.8 L569.1 160.2 M598.6 139.4 L598.6 158.9 M610.0 138.8 L610.0 170.9 M610.0 176.3 L610.0 205.7 M653.5 156.8 L672.9 156.8 M717.2 112.0 L717.2 120.2 M724.7 112.0 L724.7 121.5 M732.9 112.0 L732.9 121.5 M753.2 120.4 L777.0 119.9 M785.2 112.0 L785.2 122.2 M719.9 128.0 L748.5 128.0 M744.4 133.7 L744.4 141.9 M715.9 140.8 L736.2 140.8 M714.5 150.0 L747.1 150.0 M714.5 159.3 L748.5 159.3 M723.3 168.0 L748.5 168.0 M757.3 135.8 L757.3 144.6 M764.8 167.7 L766.1 169.1 M785.2 163.6 L785.2 170.4 M825.9 117.4 L825.9 148.0 M825.9 157.5 L825.9 177.2 M776.3 205.1 L786.5 205.1 M811.0 190.8 L825.9 190.8 M657.5 255.5 L661.5 255.5 M697.0 248.1 L705.0 248.1 M697.0 253.5 L705.0 253.5 M698.3 285.0 L702.3 285.0 M705.0 254.1 L722.7 254.4 M715.2 276.5 L748.5 275.9 M755.3 275.6 L782.4 275.2 L789.2 273.8 M758.0 285.1 L789.2 285.4 M800.8 271.5 L854.5 271.5 M800.8 278.6 L854.5 278.3 M808.9 287.1 L854.5 286.7 M676.2 343.5 L705.0 342.8 M718.6 372.5 L798.8 372.9"/>
<path stroke-width="5.0" d="M400.7 94.6 L448.0 93.9 L465.4 97.3 M400.7 102.6 L448.0 102.0 L465.4 105.0 M400.7 110.1 L448.0 109.5 L465.4 112.4 M604.3 19.4 L604.3 45.5 M619.3 92.3 L624.7 92.3 M635.4 64.9 L635.4 112.4 M642.1 65.5 L642.1 112.4 M648.5 65.5 L649.8 105.7 M661.5 61.5 L661.5 99.0 M723.1 18.0 L723.1 51.5 M731.1 26.7 L774.6 26.7 M711.7 97.7 L711.7 112.4 M407.8 118.0 L426.5 118.7 M431.9 118.7 L445.3 118.7 M452.0 120.7 L464.0 120.7 M428.6 195.0 L428.6 208.4 M603.3 121.4 L624.7 121.4 M698.3 124.0 L705.0 124.0 M569.1 138.8 L569.1 160.2 M598.6 139.4 L598.6 158.9 M610.0 138.8 L610.0 170.9 M610.0 176.3 L610.0 205.7 M653.5 156.8 L672.9 156.8 M717.2 112.0 L717.2 120.2 M724.7 112.0 L724.7 121.5 M732.9 112.0 L732.9 121.5 M753.2 120.4 L777.0 119.9 M785.2 112.0 L785.2 122.2 M719.9 128.0 L748.5 128.0 M744.4 133.7 L744.4 141.9 M715.9 140.8 L736.2 140.8 M714.5 150.0 L747.1 150.0 M714.5 159.3 L748.5 159.3 M723.3 168.0 L748.5 168.0 M757.3 135.8 L757.3 144.6 M764.8 167.7 L766.1 169.1 M785.2 163.6 L785.2 170.4 M825.9 117.4 L825.9 148.0 M825.9 157.5 L825.9 177.2 M776.3 205.1 L786.5 205.1 M811.0 190.8 L825.9 190.8 M657.5 255.5 L661.5 255.5 M697.0 248.1 L705.0 248.1 M697.0 253.5 L705.0 253.5 M698.3 285.0 L702.3 285.0 M705.0 254.1 L722.7 254.4 M715.2 276.5 L748.5 275.9 M755.3 275.6 L782.4 275.2 L789.2 273.8 M758.0 285.1 L789.2 285.4 M800.8 271.5 L854.5 271.5 M800.8 278.6 L854.5 278.3 M808.9 287.1 L854.5 286.7 M676.2 343.5 L705.0 342.8 M718.6 372.5 L798.8 372.9"/>
<path stroke="#3a5268" stroke-linecap="butt" stroke-width="1.4" stroke-dasharray="1.4 4.01" stroke-dashoffset="0.7" d="M400.7 94.6 L448.0 93.9 L465.4 97.3 M400.7 102.6 L448.0 102.0 L465.4 105.0 M400.7 110.1 L448.0 109.5 L465.4 112.4 M604.3 19.4 L604.3 45.5 M619.3 92.3 L624.7 92.3 M635.4 64.9 L635.4 112.4 M642.1 65.5 L642.1 112.4 M648.5 65.5 L649.8 105.7 M661.5 61.5 L661.5 99.0 M723.1 18.0 L723.1 51.5 M731.1 26.7 L774.6 26.7 M711.7 97.7 L711.7 112.4 M407.8 118.0 L426.5 118.7 M431.9 118.7 L445.3 118.7 M452.0 120.7 L464.0 120.7 M428.6 195.0 L428.6 208.4 M603.3 121.4 L624.7 121.4 M698.3 124.0 L705.0 124.0 M569.1 138.8 L569.1 160.2 M598.6 139.4 L598.6 158.9 M610.0 138.8 L610.0 170.9 M610.0 176.3 L610.0 205.7 M653.5 156.8 L672.9 156.8 M717.2 112.0 L717.2 120.2 M724.7 112.0 L724.7 121.5 M732.9 112.0 L732.9 121.5 M753.2 120.4 L777.0 119.9 M785.2 112.0 L785.2 122.2 M719.9 128.0 L748.5 128.0 M744.4 133.7 L744.4 141.9 M715.9 140.8 L736.2 140.8 M714.5 150.0 L747.1 150.0 M714.5 159.3 L748.5 159.3 M723.3 168.0 L748.5 168.0 M757.3 135.8 L757.3 144.6 M764.8 167.7 L766.1 169.1 M785.2 163.6 L785.2 170.4 M825.9 117.4 L825.9 148.0 M825.9 157.5 L825.9 177.2 M776.3 205.1 L786.5 205.1 M811.0 190.8 L825.9 190.8 M657.5 255.5 L661.5 255.5 M697.0 248.1 L705.0 248.1 M697.0 253.5 L705.0 253.5 M698.3 285.0 L702.3 285.0 M705.0 254.1 L722.7 254.4 M715.2 276.5 L748.5 275.9 M755.3 275.6 L782.4 275.2 L789.2 273.8 M758.0 285.1 L789.2 285.4 M800.8 271.5 L854.5 271.5 M800.8 278.6 L854.5 278.3 M808.9 287.1 L854.5 286.7 M676.2 343.5 L705.0 342.8 M718.6 372.5 L798.8 372.9"/>
<path stroke-width="6.5" stroke-dasharray="0.01 5.85" d="M701.0 17.4 L701.0 33.4 M599.2 92.3 L610.0 92.3 M596.6 99.0 L611.3 99.0 M648.8 108.4 L659.5 103.0 M717.7 18.0 L717.0 48.1 M471.4 112.0 L471.4 128.1 M563.1 112.0 L563.1 130.7 M571.8 112.0 L571.8 130.7 M694.3 112.0 L694.3 129.4 M699.6 116.0 L705.0 116.0 M745.8 112.0 L745.8 120.8 M771.6 163.6 L771.6 170.4 M778.4 163.6 L778.4 170.4 M820.5 117.4 L820.5 148.0 M820.5 157.5 L820.5 177.2 M779.7 199.0 L786.5 199.0 M502.2 238.8 L502.2 269.6 M657.5 250.8 L661.5 250.8 M669.5 251.5 L676.9 251.5 M669.5 257.5 L676.9 257.5 M682.9 252.2 L690.3 251.5 M682.9 258.2 L690.3 258.2 M686.3 244.1 L705.0 243.5 M697.0 260.2 L705.0 260.2 M658.1 266.9 L666.2 266.9 M658.1 272.9 L666.2 272.9 M658.1 278.9 L666.2 278.9 M658.1 285.0 L663.5 285.0 M672.9 266.9 L690.3 266.9 M672.9 272.9 L690.3 272.9 M672.9 278.9 L690.3 278.9 M672.9 285.6 L690.3 285.6 M697.0 266.9 L705.0 266.9 M697.0 272.9 L705.0 272.9 M698.3 278.9 L705.0 278.9"/>
<path stroke-width="5.5" d="M701.0 17.4 L701.0 33.4 M599.2 92.3 L610.0 92.3 M596.6 99.0 L611.3 99.0 M648.8 108.4 L659.5 103.0 M717.7 18.0 L717.0 48.1 M471.4 112.0 L471.4 128.1 M563.1 112.0 L563.1 130.7 M571.8 112.0 L571.8 130.7 M694.3 112.0 L694.3 129.4 M699.6 116.0 L705.0 116.0 M745.8 112.0 L745.8 120.8 M771.6 163.6 L771.6 170.4 M778.4 163.6 L778.4 170.4 M820.5 117.4 L820.5 148.0 M820.5 157.5 L820.5 177.2 M779.7 199.0 L786.5 199.0 M502.2 238.8 L502.2 269.6 M657.5 250.8 L661.5 250.8 M669.5 251.5 L676.9 251.5 M669.5 257.5 L676.9 257.5 M682.9 252.2 L690.3 251.5 M682.9 258.2 L690.3 258.2 M686.3 244.1 L705.0 243.5 M697.0 260.2 L705.0 260.2 M658.1 266.9 L666.2 266.9 M658.1 272.9 L666.2 272.9 M658.1 278.9 L666.2 278.9 M658.1 285.0 L663.5 285.0 M672.9 266.9 L690.3 266.9 M672.9 272.9 L690.3 272.9 M672.9 278.9 L690.3 278.9 M672.9 285.6 L690.3 285.6 M697.0 266.9 L705.0 266.9 M697.0 272.9 L705.0 272.9 M698.3 278.9 L705.0 278.9"/>
<path stroke="#3a5268" stroke-linecap="butt" stroke-width="1.6" stroke-dasharray="1.4 4.46" stroke-dashoffset="0.7" d="M701.0 17.4 L701.0 33.4 M599.2 92.3 L610.0 92.3 M596.6 99.0 L611.3 99.0 M648.8 108.4 L659.5 103.0 M717.7 18.0 L717.0 48.1 M471.4 112.0 L471.4 128.1 M563.1 112.0 L563.1 130.7 M571.8 112.0 L571.8 130.7 M694.3 112.0 L694.3 129.4 M699.6 116.0 L705.0 116.0 M745.8 112.0 L745.8 120.8 M771.6 163.6 L771.6 170.4 M778.4 163.6 L778.4 170.4 M820.5 117.4 L820.5 148.0 M820.5 157.5 L820.5 177.2 M779.7 199.0 L786.5 199.0 M502.2 238.8 L502.2 269.6 M657.5 250.8 L661.5 250.8 M669.5 251.5 L676.9 251.5 M669.5 257.5 L676.9 257.5 M682.9 252.2 L690.3 251.5 M682.9 258.2 L690.3 258.2 M686.3 244.1 L705.0 243.5 M697.0 260.2 L705.0 260.2 M658.1 266.9 L666.2 266.9 M658.1 272.9 L666.2 272.9 M658.1 278.9 L666.2 278.9 M658.1 285.0 L663.5 285.0 M672.9 266.9 L690.3 266.9 M672.9 272.9 L690.3 272.9 M672.9 278.9 L690.3 278.9 M672.9 285.6 L690.3 285.6 M697.0 266.9 L705.0 266.9 M697.0 272.9 L705.0 272.9 M698.3 278.9 L705.0 278.9"/>
<path stroke-width="7.0" stroke-dasharray="0.01 6.30" d="M599.2 85.6 L610.0 85.6 M596.6 105.7 L611.3 105.7 M603.3 116.0 L626.0 116.0 M484.1 242.8 L501.5 243.5 M484.1 263.5 L501.5 263.5"/>
<path stroke-width="5.9" d="M599.2 85.6 L610.0 85.6 M596.6 105.7 L611.3 105.7 M603.3 116.0 L626.0 116.0 M484.1 242.8 L501.5 243.5 M484.1 263.5 L501.5 263.5"/>
<path stroke="#3a5268" stroke-linecap="butt" stroke-width="1.7" stroke-dasharray="1.4 4.91" stroke-dashoffset="0.7" d="M599.2 85.6 L610.0 85.6 M596.6 105.7 L611.3 105.7 M603.3 116.0 L626.0 116.0 M484.1 242.8 L501.5 243.5 M484.1 263.5 L501.5 263.5"/>
<path stroke-width="7.5" stroke-dasharray="0.01 6.75" d="M730.8 255.5 L748.5 255.5"/>
<path stroke-width="6.3" d="M730.8 255.5 L748.5 255.5"/>
<path stroke="#3a5268" stroke-linecap="butt" stroke-width="1.8" stroke-dasharray="1.4 5.36" stroke-dashoffset="0.7" d="M730.8 255.5 L748.5 255.5"/>
<path stroke-width="8.0" stroke-dasharray="0.01 7.20" d="M796.0 60.2 L794.7 87.0"/>
<path stroke-width="6.7" d="M796.0 60.2 L794.7 87.0"/>
<path stroke="#3a5268" stroke-linecap="butt" stroke-width="1.9" stroke-dasharray="1.4 5.81" stroke-dashoffset="0.7" d="M796.0 60.2 L794.7 87.0"/>
<path stroke-width="8.5" stroke-dasharray="0.01 7.65" d="M802.8 179.9 L802.8 192.2 M730.8 266.3 L748.5 266.3"/>
<path stroke-width="7.1" d="M802.8 179.9 L802.8 192.2 M730.8 266.3 L748.5 266.3"/>
<path stroke="#3a5268" stroke-linecap="butt" stroke-width="2.0" stroke-dasharray="1.4 6.26" stroke-dashoffset="0.7" d="M802.8 179.9 L802.8 192.2 M730.8 266.3 L748.5 266.3"/>
</g>
<g stroke="#0b1b2b" stroke-width="1.8">
<rect x="479.7" y="39.7" width="3.5" height="2.4" rx="1" fill="#c9dbec"/>
<rect x="479.7" y="44.8" width="3.5" height="2.3" rx="1" fill="#c9dbec"/>
<rect x="516.2" y="45.7" width="5.1" height="4.8" rx="1" fill="#c9dbec"/>
<rect x="520.3" y="39.7" width="3.7" height="2.4" rx="1" fill="#c9dbec"/>
<rect x="527.2" y="46.1" width="5.5" height="5.1" rx="1" fill="#c9dbec"/>
<rect x="381.3" y="61.1" width="5.5" height="2.4" rx="1" fill="#c9dbec"/>
<rect x="378.0" y="66.5" width="3.1" height="4.4" rx="1" fill="#c9dbec"/>
<rect x="384.0" y="67.8" width="3.7" height="3.1" rx="1" fill="#c9dbec"/>
<rect x="384.0" y="74.9" width="3.7" height="2.7" rx="1" fill="#c9dbec"/>
<rect x="388.7" y="89.2" width="4.4" height="2.8" rx="1" fill="#c9dbec"/>
<rect x="491.7" y="74.5" width="4.4" height="3.1" rx="1" fill="#c9dbec"/>
<rect x="499.1" y="74.5" width="4.4" height="3.1" rx="1" fill="#c9dbec"/>
<rect x="495.8" y="83.9" width="3.7" height="3.7" rx="1" fill="#c9dbec"/>
<rect x="501.8" y="84.6" width="4.4" height="3.1" rx="1" fill="#c9dbec"/>
<rect x="479.7" y="99.3" width="3.7" height="4.4" rx="1" fill="#c9dbec"/>
<rect x="560.0" y="40.4" width="4.4" height="3.7" rx="1" fill="#c9dbec"/>
<rect x="558.7" y="89.9" width="3.1" height="3.7" rx="1" fill="#c9dbec"/>
<rect x="581.4" y="85.0" width="9.1" height="2.3" rx="1" fill="#c9dbec"/>
<rect x="852.9" y="95.3" width="9.6" height="2.4" rx="1" fill="#c9dbec"/>
<rect x="856.9" y="105.7" width="5.6" height="2.1" rx="1" fill="#c9dbec"/>
<rect x="400.7" y="142.4" width="3.7" height="8.4" rx="1" fill="#c9dbec"/>
<rect x="401.4" y="171.8" width="3.7" height="9.1" rx="1" fill="#c9dbec"/>
<rect x="480.4" y="138.4" width="3.7" height="3.7" rx="1" fill="#c9dbec"/>
<rect x="480.4" y="145.7" width="3.7" height="4.4" rx="1" fill="#c9dbec"/>
<rect x="495.8" y="151.8" width="3.1" height="4.4" rx="1" fill="#c9dbec"/>
<rect x="493.7" y="161.1" width="3.7" height="3.7" rx="1" fill="#c9dbec"/>
<rect x="479.7" y="189.2" width="3.1" height="4.4" rx="1" fill="#c9dbec"/>
<rect x="486.4" y="189.9" width="3.1" height="3.7" rx="1" fill="#c9dbec"/>
<rect x="832.0" y="156.2" width="7.5" height="3.4" rx="1" fill="#c9dbec"/>
<rect x="832.0" y="166.3" width="7.5" height="2.7" rx="1" fill="#c9dbec"/>
<rect x="857.2" y="190.8" width="7.5" height="3.4" rx="1" fill="#c9dbec"/>
<rect x="856.5" y="201.9" width="6.8" height="3.5" rx="1" fill="#c9dbec"/>
<rect x="833.4" y="203.3" width="5.4" height="4.9" rx="1" fill="#c9dbec"/>
<rect x="795.4" y="194.9" width="8.8" height="2.7" rx="1" fill="#c9dbec"/>
<rect x="794.0" y="201.0" width="12.2" height="4.1" rx="1" fill="#c9dbec"/>
<rect x="388.4" y="222.0" width="2.7" height="6.7" rx="1" fill="#c9dbec"/>
<rect x="463.4" y="220.3" width="4.7" height="3.1" rx="1" fill="#c9dbec"/>
<rect x="531.0" y="252.8" width="5.4" height="8.0" rx="1" fill="#c9dbec"/>
<rect x="830.7" y="216.1" width="4.1" height="6.1" rx="1" fill="#c9dbec"/>
<rect x="830.7" y="224.9" width="4.1" height="10.2" rx="1" fill="#c9dbec"/>
<rect x="857.2" y="219.5" width="5.2" height="4.8" rx="1" fill="#c9dbec"/>
<rect x="719.3" y="312.7" width="2.7" height="4.8" rx="1" fill="#c9dbec"/>
<rect x="772.3" y="319.5" width="7.5" height="4.1" rx="1" fill="#c9dbec"/>
<rect x="758.7" y="341.9" width="8.8" height="2.7" rx="1" fill="#c9dbec"/>
<rect x="781.1" y="358.5" width="6.1" height="3.5" rx="1" fill="#c9dbec"/>
<rect x="794.0" y="358.2" width="4.1" height="2.7" rx="1" fill="#c9dbec"/>
<rect x="857.2" y="374.5" width="5.4" height="4.1" rx="1" fill="#c9dbec"/>
<rect x="857.2" y="383.3" width="5.4" height="8.2" rx="1" fill="#c9dbec"/>
</g></g>
<path d="M374.6 294.4 L397 294.4 L397 313" fill="none" stroke="#e0861e" stroke-width="2"/>
<path d="M372 290 L378 284 L384 290 L378 296 Z" fill="none" stroke="#2a3ae0" stroke-width="1.2"/>
<path d="M710.7 92 L712.6 388" stroke="#0a1420" stroke-width="1.5" fill="none"/>
<circle cx="710.9" cy="121.0" r="4.6" fill="#35a6ea"/><circle cx="710.9" cy="121.0" r="3.4" fill="#b6cfe6" stroke="#1a2a3a" stroke-width="0.8"/>
<circle cx="710.9" cy="130.0" r="4.6" fill="#35a6ea"/><circle cx="710.9" cy="130.0" r="3.4" fill="#b6cfe6" stroke="#1a2a3a" stroke-width="0.8"/>
<circle cx="711.0" cy="138.0" r="4.6" fill="#35a6ea"/><circle cx="711.0" cy="138.0" r="3.4" fill="#b6cfe6" stroke="#1a2a3a" stroke-width="0.8"/>
<circle cx="711.1" cy="150.0" r="4.6" fill="#35a6ea"/><circle cx="711.1" cy="150.0" r="3.4" fill="#b6cfe6" stroke="#1a2a3a" stroke-width="0.8"/>
<circle cx="711.1" cy="158.0" r="4.6" fill="#35a6ea"/><circle cx="711.1" cy="158.0" r="3.4" fill="#b6cfe6" stroke="#1a2a3a" stroke-width="0.8"/>
<circle cx="711.2" cy="165.0" r="4.6" fill="#35a6ea"/><circle cx="711.2" cy="165.0" r="3.4" fill="#b6cfe6" stroke="#1a2a3a" stroke-width="0.8"/>
<circle cx="711.3" cy="184.5" r="7.0" fill="#35a6ea"/><circle cx="711.3" cy="184.5" r="3.4" fill="#b6cfe6" stroke="#1a2a3a" stroke-width="0.8"/>
<circle cx="711.5" cy="211.5" r="7.0" fill="#35a6ea"/><circle cx="711.5" cy="211.5" r="3.4" fill="#b6cfe6" stroke="#1a2a3a" stroke-width="0.8"/>
<circle cx="711.6" cy="231.7" r="7.0" fill="#35a6ea"/><circle cx="711.6" cy="231.7" r="3.4" fill="#b6cfe6" stroke="#1a2a3a" stroke-width="0.8"/>
<circle cx="711.7" cy="252.8" r="5.4" fill="#35a6ea"/><circle cx="711.7" cy="252.8" r="3.4" fill="#b6cfe6" stroke="#1a2a3a" stroke-width="0.8"/>
<circle cx="712.0" cy="288.0" r="5.4" fill="#35a6ea"/><circle cx="712.0" cy="288.0" r="3.4" fill="#b6cfe6" stroke="#1a2a3a" stroke-width="0.8"/>
<circle cx="712.2" cy="329.7" r="5.4" fill="#35a6ea"/><circle cx="712.2" cy="329.7" r="3.4" fill="#b6cfe6" stroke="#1a2a3a" stroke-width="0.8"/>
<circle cx="712.4" cy="351.4" r="5.4" fill="#35a6ea"/><circle cx="712.4" cy="351.4" r="3.4" fill="#b6cfe6" stroke="#1a2a3a" stroke-width="0.8"/>
<circle cx="712.5" cy="371.8" r="5.4" fill="#35a6ea"/><circle cx="712.5" cy="371.8" r="3.4" fill="#b6cfe6" stroke="#1a2a3a" stroke-width="0.8"/>
<circle cx="712.6" cy="380.0" r="5.4" fill="#35a6ea"/><circle cx="712.6" cy="380.0" r="3.4" fill="#b6cfe6" stroke="#1a2a3a" stroke-width="0.8"/>
<path d="M709.1 96 L709.1 120 M713.1 96 L713.1 120" stroke="#0a1420" stroke-width="1.2" fill="none"/>
<polygon points="710.9,121.6 708.2,115.1 713.6,115.1" fill="#1626e6"/>
<polygon points="704.9,122.0 711.2,121.7 709.5,126.3" fill="#1626e6"/>
<polygon points="716.9,122.0 712.3,126.3 710.6,121.7" fill="#1626e6"/>
<polygon points="710.9,130.6 708.2,124.1 713.7,124.1" fill="#1626e6"/>
<polygon points="705.0,131.0 711.2,130.7 709.6,135.3" fill="#1626e6"/>
<polygon points="716.9,131.0 712.3,135.3 710.7,130.7" fill="#1626e6"/>
<polygon points="711.0,138.6 708.3,132.1 713.7,132.1" fill="#1626e6"/>
<polygon points="705.0,139.0 711.3,138.7 709.6,143.3" fill="#1626e6"/>
<polygon points="717.0,139.0 712.4,143.3 710.7,138.7" fill="#1626e6"/>
<polygon points="711.1,150.6 708.4,144.1 713.8,144.1" fill="#1626e6"/>
<polygon points="705.1,151.0 711.3,150.7 709.7,155.3" fill="#1626e6"/>
<polygon points="717.1,151.0 712.5,155.3 710.8,150.7" fill="#1626e6"/>
<polygon points="711.1,158.6 708.4,152.1 713.8,152.1" fill="#1626e6"/>
<polygon points="705.1,159.0 711.4,158.7 709.7,163.3" fill="#1626e6"/>
<polygon points="717.1,159.0 712.5,163.3 710.9,158.7" fill="#1626e6"/>
<polygon points="711.2,165.6 708.5,159.1 713.9,159.1" fill="#1626e6"/>
<polygon points="705.2,166.0 711.4,165.7 709.8,170.3" fill="#1626e6"/>
<polygon points="717.2,166.0 712.6,170.3 710.9,165.7" fill="#1626e6"/>
<polygon points="711.3,185.1 708.6,178.6 714.0,178.6" fill="#1626e6"/>
<polygon points="705.3,185.5 711.6,185.2 709.9,189.8" fill="#1626e6"/>
<polygon points="717.3,185.5 712.7,189.8 711.0,185.2" fill="#1626e6"/>
<polygon points="711.5,212.1 708.8,205.6 714.2,205.6" fill="#1626e6"/>
<polygon points="705.5,212.5 711.7,212.2 710.1,216.8" fill="#1626e6"/>
<polygon points="717.5,212.5 712.9,216.8 711.2,212.2" fill="#1626e6"/>
<polygon points="711.6,232.3 708.9,225.8 714.3,225.8" fill="#1626e6"/>
<polygon points="705.6,232.7 711.9,232.4 710.2,237.0" fill="#1626e6"/>
<polygon points="717.6,232.7 713.0,237.0 711.3,232.4" fill="#1626e6"/>
<polygon points="711.7,253.4 709.0,246.9 714.4,246.9" fill="#1626e6"/>
<polygon points="705.8,253.8 712.0,253.5 710.4,258.1" fill="#1626e6"/>
<polygon points="717.7,253.8 713.1,258.1 711.5,253.5" fill="#1626e6"/>
<polygon points="712.0,288.6 709.3,282.1 714.7,282.1" fill="#1626e6"/>
<polygon points="706.0,289.0 712.2,288.7 710.6,293.3" fill="#1626e6"/>
<polygon points="718.0,289.0 713.4,293.3 711.7,288.7" fill="#1626e6"/>
<polygon points="712.2,330.3 709.5,323.8 714.9,323.8" fill="#1626e6"/>
<polygon points="706.3,330.7 712.5,330.4 710.9,335.0" fill="#1626e6"/>
<polygon points="718.2,330.7 713.6,335.0 712.0,330.4" fill="#1626e6"/>
<polygon points="712.4,352.0 709.7,345.5 715.1,345.5" fill="#1626e6"/>
<polygon points="706.4,352.4 712.7,352.1 711.0,356.7" fill="#1626e6"/>
<polygon points="718.4,352.4 713.8,356.7 712.1,352.1" fill="#1626e6"/>
<polygon points="712.5,372.4 709.8,365.9 715.2,365.9" fill="#1626e6"/>
<polygon points="706.5,372.8 712.8,372.5 711.1,377.1" fill="#1626e6"/>
<polygon points="718.5,372.8 713.9,377.1 712.2,372.5" fill="#1626e6"/>
<polygon points="712.6,380.6 709.9,374.1 715.3,374.1" fill="#1626e6"/>
<polygon points="706.6,381.0 712.8,380.7 711.2,385.3" fill="#1626e6"/>
<polygon points="718.6,381.0 714.0,385.3 712.3,380.7" fill="#1626e6"/>
<circle cx="731.0" cy="63.7" r="5.8" fill="#35a6ea"/>
<circle cx="738.5" cy="72.8" r="5.8" fill="#35a6ea"/>
<circle cx="742.8" cy="80.9" r="5.8" fill="#35a6ea"/>
<circle cx="743.9" cy="88.9" r="5.8" fill="#35a6ea"/>
<circle cx="719.3" cy="88.4" r="5.8" fill="#35a6ea"/>
<circle cx="710.7" cy="93.2" r="5.8" fill="#35a6ea"/>
<circle cx="749.3" cy="51.4" r="5.8" fill="#35a6ea"/>
<circle cx="753.0" cy="58.9" r="5.8" fill="#35a6ea"/>
<circle cx="755.1" cy="68.0" r="5.8" fill="#35a6ea"/>
<circle cx="760.0" cy="74.4" r="5.8" fill="#35a6ea"/>
<circle cx="771.7" cy="47.7" r="5.8" fill="#35a6ea"/>
<circle cx="777.1" cy="55.7" r="5.8" fill="#35a6ea"/>
<circle cx="771.7" cy="69.1" r="5.8" fill="#35a6ea"/>
<circle cx="765.3" cy="88.9" r="5.8" fill="#35a6ea"/>
<circle cx="783.0" cy="88.4" r="5.8" fill="#35a6ea"/>
<circle cx="789.4" cy="93.7" r="5.8" fill="#35a6ea"/>
<circle cx="817.2" cy="39.4" r="5.8" fill="#35a6ea"/>
<circle cx="838.2" cy="30.2" r="5.8" fill="#35a6ea"/>
<path d="M792 41.5 L786 48.5 L782.5 60 L777 67.5" fill="none" stroke="#35a6ea" stroke-width="7.5" stroke-linecap="round" stroke-linejoin="round"/>
<circle cx="731.0" cy="63.7" r="3.4" fill="#b6cfe6" stroke="#1a2a3a" stroke-width="0.8"/>
<circle cx="738.5" cy="72.8" r="3.4" fill="#b6cfe6" stroke="#1a2a3a" stroke-width="0.8"/>
<circle cx="742.8" cy="80.9" r="3.4" fill="#b6cfe6" stroke="#1a2a3a" stroke-width="0.8"/>
<circle cx="743.9" cy="88.9" r="3.4" fill="#b6cfe6" stroke="#1a2a3a" stroke-width="0.8"/>
<circle cx="719.3" cy="88.4" r="3.4" fill="#b6cfe6" stroke="#1a2a3a" stroke-width="0.8"/>
<circle cx="710.7" cy="93.2" r="3.4" fill="#b6cfe6" stroke="#1a2a3a" stroke-width="0.8"/>
<circle cx="749.3" cy="51.4" r="3.4" fill="#b6cfe6" stroke="#1a2a3a" stroke-width="0.8"/>
<circle cx="753.0" cy="58.9" r="3.4" fill="#b6cfe6" stroke="#1a2a3a" stroke-width="0.8"/>
<circle cx="755.1" cy="68.0" r="3.4" fill="#b6cfe6" stroke="#1a2a3a" stroke-width="0.8"/>
<circle cx="760.0" cy="74.4" r="3.4" fill="#b6cfe6" stroke="#1a2a3a" stroke-width="0.8"/>
<circle cx="771.7" cy="47.7" r="3.4" fill="#b6cfe6" stroke="#1a2a3a" stroke-width="0.8"/>
<circle cx="777.1" cy="55.7" r="3.4" fill="#b6cfe6" stroke="#1a2a3a" stroke-width="0.8"/>
<circle cx="771.7" cy="69.1" r="3.4" fill="#b6cfe6" stroke="#1a2a3a" stroke-width="0.8"/>
<circle cx="765.3" cy="88.9" r="3.4" fill="#b6cfe6" stroke="#1a2a3a" stroke-width="0.8"/>
<circle cx="783.0" cy="88.4" r="3.4" fill="#b6cfe6" stroke="#1a2a3a" stroke-width="0.8"/>
<circle cx="789.4" cy="93.7" r="3.4" fill="#b6cfe6" stroke="#1a2a3a" stroke-width="0.8"/>
<circle cx="817.2" cy="39.4" r="3.4" fill="#b6cfe6" stroke="#1a2a3a" stroke-width="0.8"/>
<circle cx="838.2" cy="30.2" r="3.4" fill="#b6cfe6" stroke="#1a2a3a" stroke-width="0.8"/>
<path d="M861 17.3 L866.6 22.9 L861 28.5 L855.4 22.9 Z" fill="#cfe6d8" stroke="#2fc02f" stroke-width="1.6"/>
<path d="M710.7 93.2 L719.3 88.4 L742.8 80.9 L760 74.4 L771.7 69.1 L777 67 L782.5 60 L786 48.5 L792 41.5 L817.2 39.4 L838.2 30.2 L861 22.7 L879 19.8" fill="none" stroke="#0a1420" stroke-width="1.1"/>
<path d="M731 63.7 L742.8 80.9 L743.9 88.9" fill="none" stroke="#0a1420" stroke-width="1.1"/>
<path d="M749.3 51.4 L760 74.4 L765.3 88.9 L783 88.4 L789.4 93.7" fill="none" stroke="#0a1420" stroke-width="1.1"/>
<path d="M771.7 47.7 L784 47.7" fill="none" stroke="#0a1420" stroke-width="1.1"/>
<path d="M837.6 5 L837.6 30 M837.9 12 L837.9 28" fill="none" stroke="#0a1420" stroke-width="1.1"/>
<path d="M793 41 L786 48.5 L782.5 60 L777 67.5" fill="none" stroke="#1424c8" stroke-width="3.6" stroke-linecap="round" stroke-linejoin="round"/>
<ellipse cx="787.5" cy="52" rx="2" ry="5" transform="rotate(25 787.5 52)" fill="#d4e6f5" stroke="#20a8a8" stroke-width="1"/>
<polygon points="738.4,72.7 732.9,69.8 736.6,66.7" fill="#1626e6"/>
<polygon points="743.1,81.5 738.3,77.5 742.5,75.2" fill="#1626e6"/>
<polygon points="742.7,79.9 745.9,85.3 741.1,86.0" fill="#1626e6"/>
<polygon points="710.3,93.4 714.2,88.5 716.5,92.7" fill="#1626e6"/>
<polygon points="723.1,87.2 727.9,83.1 729.4,87.7" fill="#1626e6"/>
<polygon points="753.4,59.7 748.7,55.6 753.0,53.4" fill="#1626e6"/>
<polygon points="755.2,68.6 751.6,63.5 756.3,62.4" fill="#1626e6"/>
<polygon points="760.6,75.2 755.2,72.1 759.0,69.1" fill="#1626e6"/>
<polygon points="760.4,74.2 764.7,69.6 766.7,74.0" fill="#1626e6"/>
<polygon points="760.4,75.6 764.7,80.2 760.1,81.8" fill="#1626e6"/>
<polygon points="767.2,88.8 772.9,86.3 773.1,91.1" fill="#1626e6"/>
<polygon points="782.3,87.8 788.3,89.7 785.2,93.4" fill="#1626e6"/>
<polygon points="772.0,68.2 772.0,62.0 776.5,63.8" fill="#1626e6"/>
<polygon points="744.8,80.2 749.3,75.8 751.1,80.4" fill="#1626e6"/>
<polygon points="784.2,47.7 778.8,50.0 778.8,45.4" fill="#1626e6"/>
<polygon points="837.6,30.4 835.2,24.6 840.0,24.6" fill="#1626e6"/>
<polygon points="839.0,29.9 844.9,29.6 843.3,33.9" fill="#1626e6"/>
<polygon points="813.4,39.8 814.2,33.9 818.1,36.2" fill="#1626e6"/>
<polygon points="821.5,39.4 818.7,44.7 815.8,41.2" fill="#1626e6"/>
<polygon points="709.8,86.6 714.3,91.5 709.5,93.3" fill="#1626e6"/>
<polygon points="706.7,98.1 707.5,91.5 712.0,94.1" fill="#1626e6"/>
<polygon points="716.8,95.6 710.9,94.8 713.2,90.9" fill="#1626e6"/>
<path d="M832 4.5 L837.6 11.5 L843.2 4.5 M837.6 4.5 L837.6 14" fill="none" stroke="#0a1420" stroke-width="1"/>
<path d="M879 14 L885 20 L879 26 L873 20 Z" fill="#ffffff" stroke="#0a1420" stroke-width="1"/>
<path d="M874 20.5 L880 19.2" stroke="#0a1420" stroke-width="1.3"/>
<path d="M864 398.5 L870 404.6 L864 410.7 L858 404.6 Z" fill="#3050c8" fill-opacity="0.7" stroke="#2fc02f" stroke-width="1.6"/>
<path d="M391.5 275.0 L388.3 291.0" stroke="#8a5a3a" stroke-width="1"/><circle cx="391.5" cy="275.0" r="3.8" fill="none" stroke="#18a8a8" stroke-width="1.3"/><path d="M384.3 286.5 L388.3 291.0 L392.8 287.5" fill="none" stroke="#18a8a8" stroke-width="1.3"/>
<path d="M562.4 298.5 L559.5 311.5" stroke="#8a5a3a" stroke-width="1"/><circle cx="562.4" cy="298.5" r="3.8" fill="none" stroke="#18a8a8" stroke-width="1.3"/><path d="M555.5 307.0 L559.5 311.5 L564.0 308.0" fill="none" stroke="#18a8a8" stroke-width="1.3"/>
<path d="M558 305 L553.5 309.5 L558 314" fill="none" stroke="#18a8a8" stroke-width="1.5"/>
<path d="M602.6 317.8 L598.9 329.0" stroke="#8a5a3a" stroke-width="1"/><circle cx="602.6" cy="317.8" r="3.8" fill="none" stroke="#18a8a8" stroke-width="1.3"/><path d="M594.9 324.5 L598.9 329.0 L603.4 325.5" fill="none" stroke="#18a8a8" stroke-width="1.3"/>
<path d="M673.5 361.5 L669.0 373.5" stroke="#8a5a3a" stroke-width="1"/><circle cx="673.5" cy="361.5" r="3.8" fill="none" stroke="#18a8a8" stroke-width="1.3"/><path d="M665.0 369.0 L669.0 373.5 L673.5 370.0" fill="none" stroke="#18a8a8" stroke-width="1.3"/>
<ellipse cx="400.5" cy="133.3" rx="5.5" ry="4" fill="none" stroke="#18a8a8" stroke-width="1.5"/><circle cx="393.5" cy="133.3" r="3" fill="none" stroke="#203080" stroke-width="1"/><path d="M393 133.3 L401 133.3" stroke="#8a5a3a" stroke-width="1"/>
<path d="M510 128 Q518 126 517 134 Q508 138 512 146 Q513 154 518 155" fill="none" stroke="#18a8a8" stroke-width="1.6"/>
<path d="M508 133 L514 150" stroke="#2030c0" stroke-width="1"/><path d="M509 131 L516 129 M510 134 L517 142 M511 136 L515 146" stroke="#8a5a3a" stroke-width="0.8"/>
<rect x="547" y="280" width="10" height="8.5" fill="#1e9a58" stroke="#0c4a30" stroke-width="1"/><path d="M550 282 L555 284.5 L550 287" stroke="#5ad090" fill="none" stroke-width="0.8"/>
<path d="M734.5 211 L741.5 211 L741 219.5 L735 219.5 Z" fill="#1e9a58" stroke="#0c4a30" stroke-width="1"/><path d="M736 206 L736 211 M740 206 L740 211" stroke="#0c4a30" stroke-width="1.5"/>
<rect x="707.5" y="358" width="4" height="4" fill="#1e9a58"/><rect x="713" y="358.5" width="4" height="4" fill="#1e9a58"/>
<rect x="704.5" y="382" width="3.5" height="4" fill="#e8902a"/><rect x="708" y="385.5" width="3" height="4" fill="#e8902a"/>
<circle cx="715.6" cy="387.4" r="3.3" fill="#eef6fb" stroke="#30b0b0" stroke-width="1.4"/>
<path d="M722 367.5 L738 367.5" stroke="#7aa8d8" stroke-width="1.5"/>
<polygon points="375,14.5 872,14.5 873.5,409 705,397.5 553,332.5 477,331 422.5,316 375,311.5" fill="none" stroke="#1b49a6" stroke-width="2" stroke-linejoin="miter"/>
</svg>
</div>

<div class="dot" style="left:617px;top:422px"></div><div class="dot" style="left:620px;top:422px"></div><div class="dot" style="left:623px;top:422px"></div><div class="dot" style="left:626px;top:422px"></div><div class="dot" style="left:629px;top:422px"></div><div class="dot" style="left:632px;top:422px"></div><div class="dot" style="left:338px;top:581px"></div><div class="dot" style="left:338px;top:584px"></div><div class="dot" style="left:338px;top:587px"></div><div class="dot" style="left:338px;top:590px"></div><div class="dot" style="left:338px;top:593px"></div><div class="dot" style="left:338px;top:596px"></div><div class="dot" style="left:2px;top:340px"></div><div class="dot" style="left:2px;top:343px"></div><div class="dot" style="left:2px;top:346px"></div><div class="dot" style="left:2px;top:349px"></div><div class="dot" style="left:2px;top:352px"></div><div class="dot" style="left:2px;top:355px"></div><div class="dot" style="left:1246px;top:340px"></div><div class="dot" style="left:1246px;top:343px"></div><div class="dot" style="left:1246px;top:346px"></div><div class="dot" style="left:1246px;top:349px"></div><div class="dot" style="left:1246px;top:352px"></div><div class="dot" style="left:1246px;top:355px"></div>
<div class="ttl" style="left:7.5px;top:430px">FLO-2D Table Editor</div>
<div class="dk" style="left:308px;top:430px"><svg class="abs" style="left:0;top:0" width="9" height="9"><rect x="3.5" y="1.5" width="4" height="4" fill="none" stroke="#6a6560"/><rect x="1.5" y="3.5" width="4" height="4" fill="#f0f0f0" stroke="#6a6560"/></svg></div>
<div class="dk" style="left:322px;top:430px"><svg class="abs" style="left:0;top:0" width="9" height="9"><path d="M1.5 1.5L7.5 7.5M7.5 1.5L1.5 7.5" stroke="#5a5550" stroke-width="2"/></svg></div>
<div class="ttl" style="left:343.5px;top:430px">FLO-2D Plot</div>
<div class="dk" style="left:1216px;top:430px"><svg class="abs" style="left:0;top:0" width="9" height="9"><rect x="3.5" y="1.5" width="4" height="4" fill="none" stroke="#6a6560"/><rect x="1.5" y="3.5" width="4" height="4" fill="#f0f0f0" stroke="#6a6560"/></svg></div>
<div class="dk" style="left:1230px;top:430px"><svg class="abs" style="left:0;top:0" width="9" height="9"><path d="M1.5 1.5L7.5 7.5M7.5 1.5L1.5 7.5" stroke="#5a5550" stroke-width="2"/></svg></div>

<div class="btn" style="left:11px;top:479px;width:60px">Copy</div>
<div class="btn" style="left:11px;top:533px;width:60px">Paste</div>
<div class="btn" style="left:11px;top:587px;width:60px">Delete</div>
<div class="btn" style="left:11px;top:642px;width:60px">Undo</div>
<div class="btn" style="left:11px;top:696px;width:60px">Redo</div>

<div id="tbl"></div>
<div class="hd" style="left:78px;width:25px"></div>
<div class="hd" style="left:103px;width:92px">S1 - Station (ft)</div>
<div class="hd" style="left:195px;width:120px;text-align:left;padding-left:21px;border-right:none">S1 - Bed elevation (ft)</div>
<div class="rh" style="top:469px">1</div><div class="c1" style="top:469px">0.00</div><div class="c2" style="top:469px">1398.18</div>
<div class="rh" style="top:489px">2</div><div class="c1" style="top:489px">20.00</div><div class="c2" style="top:489px">1398.15</div>
<div class="rh" style="top:509px">3</div><div class="c1" style="top:509px">40.00</div><div class="c2" style="top:509px">1398.12</div>
<div class="rh" style="top:529px">4</div><div class="c1" style="top:529px">60.00</div><div class="c2" style="top:529px">1398.09</div>
<div class="rh" style="top:549px">5</div><div class="c1" style="top:549px">80.00</div><div class="c2" style="top:549px">1398.08</div>
<div class="rh" style="top:569px">6</div><div class="c1" style="top:569px">104.14</div><div class="c2" style="top:569px">1398.07</div>
<div class="rh" style="top:589px">7</div><div class="c1" style="top:589px">128.28</div><div class="c2" style="top:589px">1398.06</div>
<div class="rh" style="top:609px">8</div><div class="c1" style="top:609px">148.28</div><div class="c2" style="top:609px">1398.05</div>
<div class="rh" style="top:629px">9</div><div class="c1" style="top:629px">172.42</div><div class="c2" style="top:629px">1398.04</div>
<div class="rh" style="top:649px">10</div><div class="c1" style="top:649px">196.56</div><div class="c2" style="top:649px">1398.03</div>
<div class="rh" style="top:669px">11</div><div class="c1" style="top:669px">216.56</div><div class="c2" style="top:669px">1398.03</div>
<div class="rh" style="top:689px">12</div><div class="c1" style="top:689px">236.56</div><div class="c2" style="top:689px">1398.03</div>
<div class="rh" style="top:709px">13</div><div class="c1" style="top:709px">260.70</div><div class="c2" style="top:709px">1397.99</div>
<!-- vertical scrollbar -->
<div class="sb" style="left:314px;top:451px;width:15px;height:15px"></div>
<svg class="abs" style="left:318px;top:456px" width="8" height="5"><path d="M0 4.5L4 0.5L8 4.5Z" fill="#585858"/></svg>
<div class="sb" style="left:314px;top:465px;width:15px;height:28px;background:linear-gradient(90deg,#ffffff,#f1f1f1)"></div>
<div style="left:314px;top:493px;width:15px;height:221px;background:#e4e4e4;border-left:1px solid #bcbcbc;border-right:1px solid #a8a8a8"></div>
<div class="sb" style="left:314px;top:714px;width:15px;height:15px"></div>
<svg class="abs" style="left:318px;top:719px" width="8" height="5"><path d="M0 0.5L4 4.5L8 0.5Z" fill="#585858"/></svg>
<!-- horizontal scrollbar -->
<div class="sb" style="left:77px;top:728px;width:15px;height:16px"></div>
<svg class="abs" style="left:82px;top:732px" width="5" height="8"><path d="M4.5 0L0.5 4L4.5 8Z" fill="#585858"/></svg>
<div class="sb" style="left:91px;top:728px;width:28px;height:16px;background:linear-gradient(#ffffff,#f1f1f1)"></div>
<div style="left:119px;top:728px;width:182px;height:16px;background:#e4e4e4;border-top:1px solid #bcbcbc;border-bottom:1px solid #a8a8a8"></div>
<div class="sb" style="left:300px;top:728px;width:15px;height:16px"></div>
<svg class="abs" style="left:305px;top:732px" width="5" height="8"><path d="M0.5 0L4.5 4L0.5 8Z" fill="#585858"/></svg>
<div style="left:315px;top:729px;width:13px;height:14px;background:#f0f0f0"></div>

<div id="plot"></div>
<svg class="abs" style="left:0;top:0" width="1251" height="747" viewBox="0 0 1251 747">
<defs><clipPath id="pc"><rect x="380" y="485" width="854" height="192"/></clipPath></defs>
<g clip-path="url(#pc)" shape-rendering="crispEdges">
<line x1="380" x2="1234" y1="673.5" y2="673.5" stroke="#9c9c9c"/>
<line x1="380" x2="1234" y1="668.5" y2="668.5" stroke="#f1f1f1"/>
<line x1="380" x2="1234" y1="664.5" y2="664.5" stroke="#f1f1f1"/>
<line x1="380" x2="1234" y1="659.5" y2="659.5" stroke="#f1f1f1"/>
<line x1="380" x2="1234" y1="654.5" y2="654.5" stroke="#f1f1f1"/>
<line x1="380" x2="1234" y1="649.5" y2="649.5" stroke="#c0c0c0"/>
<line x1="380" x2="1234" y1="644.5" y2="644.5" stroke="#f1f1f1"/>
<line x1="380" x2="1234" y1="639.5" y2="639.5" stroke="#f1f1f1"/>
<line x1="380" x2="1234" y1="634.5" y2="634.5" stroke="#f1f1f1"/>
<line x1="380" x2="1234" y1="629.5" y2="629.5" stroke="#f1f1f1"/>
<line x1="380" x2="1234" y1="624.5" y2="624.5" stroke="#9c9c9c"/>
<line x1="380" x2="1234" y1="620.5" y2="620.5" stroke="#f1f1f1"/>
<line x1="380" x2="1234" y1="615.5" y2="615.5" stroke="#f1f1f1"/>
<line x1="380" x2="1234" y1="610.5" y2="610.5" stroke="#f1f1f1"/>
<line x1="380" x2="1234" y1="605.5" y2="605.5" stroke="#f1f1f1"/>
<line x1="380" x2="1234" y1="600.5" y2="600.5" stroke="#c0c0c0"/>
<line x1="380" x2="1234" y1="595.5" y2="595.5" stroke="#f1f1f1"/>
<line x1="380" x2="1234" y1="590.5" y2="590.5" stroke="#f1f1f1"/>
<line x1="380" x2="1234" y1="585.5" y2="585.5" stroke="#f1f1f1"/>
<line x1="380" x2="1234" y1="580.5" y2="580.5" stroke="#f1f1f1"/>
<line x1="380" x2="1234" y1="576.5" y2="576.5" stroke="#9c9c9c"/>
<line x1="380" x2="1234" y1="571.5" y2="571.5" stroke="#f1f1f1"/>
<line x1="380" x2="1234" y1="566.5" y2="566.5" stroke="#f1f1f1"/>
<line x1="380" x2="1234" y1="561.5" y2="561.5" stroke="#f1f1f1"/>
<line x1="380" x2="1234" y1="556.5" y2="556.5" stroke="#f1f1f1"/>
<line x1="380" x2="1234" y1="551.5" y2="551.5" stroke="#c0c0c0"/>
<line x1="380" x2="1234" y1="546.5" y2="546.5" stroke="#f1f1f1"/>
<line x1="380" x2="1234" y1="541.5" y2="541.5" stroke="#f1f1f1"/>
<line x1="380" x2="1234" y1="536.5" y2="536.5" stroke="#f1f1f1"/>
<line x1="380" x2="1234" y1="531.5" y2="531.5" stroke="#f1f1f1"/>
<line x1="380" x2="1234" y1="527.5" y2="527.5" stroke="#9c9c9c"/>
<line x1="380" x2="1234" y1="522.5" y2="522.5" stroke="#f1f1f1"/>
<line x1="380" x2="1234" y1="517.5" y2="517.5" stroke="#f1f1f1"/>
<line x1="380" x2="1234" y1="512.5" y2="512.5" stroke="#f1f1f1"/>
<line x1="380" x2="1234" y1="507.5" y2="507.5" stroke="#f1f1f1"/>
<line x1="380" x2="1234" y1="502.5" y2="502.5" stroke="#c0c0c0"/>
<line x1="380" x2="1234" y1="497.5" y2="497.5" stroke="#f1f1f1"/>
<line x1="380" x2="1234" y1="492.5" y2="492.5" stroke="#f1f1f1"/>
<line x1="380" x2="1234" y1="487.5" y2="487.5" stroke="#f1f1f1"/>
<line x1="398.5" x2="398.5" y1="485" y2="677" stroke="#8a8a8a"/>
<line x1="417.5" x2="417.5" y1="485" y2="677" stroke="#dcdcdc"/>
<line x1="436.5" x2="436.5" y1="485" y2="677" stroke="#dcdcdc"/>
<line x1="456.5" x2="456.5" y1="485" y2="677" stroke="#dcdcdc"/>
<line x1="475.5" x2="475.5" y1="485" y2="677" stroke="#dcdcdc"/>
<line x1="494.5" x2="494.5" y1="485" y2="677" stroke="#b4b4b4"/>
<line x1="513.5" x2="513.5" y1="485" y2="677" stroke="#dcdcdc"/>
<line x1="533.5" x2="533.5" y1="485" y2="677" stroke="#dcdcdc"/>
<line x1="552.5" x2="552.5" y1="485" y2="677" stroke="#dcdcdc"/>
<line x1="571.5" x2="571.5" y1="485" y2="677" stroke="#dcdcdc"/>
<line x1="590.5" x2="590.5" y1="485" y2="677" stroke="#8a8a8a"/>
<line x1="610.5" x2="610.5" y1="485" y2="677" stroke="#dcdcdc"/>
<line x1="629.5" x2="629.5" y1="485" y2="677" stroke="#dcdcdc"/>
<line x1="648.5" x2="648.5" y1="485" y2="677" stroke="#dcdcdc"/>
<line x1="667.5" x2="667.5" y1="485" y2="677" stroke="#dcdcdc"/>
<line x1="687.5" x2="687.5" y1="485" y2="677" stroke="#b4b4b4"/>
<line x1="706.5" x2="706.5" y1="485" y2="677" stroke="#dcdcdc"/>
<line x1="725.5" x2="725.5" y1="485" y2="677" stroke="#dcdcdc"/>
<line x1="744.5" x2="744.5" y1="485" y2="677" stroke="#dcdcdc"/>
<line x1="763.5" x2="763.5" y1="485" y2="677" stroke="#dcdcdc"/>
<line x1="783.5" x2="783.5" y1="485" y2="677" stroke="#8a8a8a"/>
<line x1="802.5" x2="802.5" y1="485" y2="677" stroke="#dcdcdc"/>
<line x1="821.5" x2="821.5" y1="485" y2="677" stroke="#dcdcdc"/>
<line x1="840.5" x2="840.5" y1="485" y2="677" stroke="#dcdcdc"/>
<line x1="860.5" x2="860.5" y1="485" y2="677" stroke="#dcdcdc"/>
<line x1="879.5" x2="879.5" y1="485" y2="677" stroke="#b4b4b4"/>
<line x1="898.5" x2="898.5" y1="485" y2="677" stroke="#dcdcdc"/>
<line x1="917.5" x2="917.5" y1="485" y2="677" stroke="#dcdcdc"/>
<line x1="937.5" x2="937.5" y1="485" y2="677" stroke="#dcdcdc"/>
<line x1="956.5" x2="956.5" y1="485" y2="677" stroke="#dcdcdc"/>
<line x1="975.5" x2="975.5" y1="485" y2="677" stroke="#8a8a8a"/>
<line x1="994.5" x2="994.5" y1="485" y2="677" stroke="#dcdcdc"/>
<line x1="1014.5" x2="1014.5" y1="485" y2="677" stroke="#dcdcdc"/>
<line x1="1033.5" x2="1033.5" y1="485" y2="677" stroke="#dcdcdc"/>
<line x1="1052.5" x2="1052.5" y1="485" y2="677" stroke="#dcdcdc"/>
<line x1="1071.5" x2="1071.5" y1="485" y2="677" stroke="#b4b4b4"/>
<line x1="1091.5" x2="1091.5" y1="485" y2="677" stroke="#dcdcdc"/>
<line x1="1110.5" x2="1110.5" y1="485" y2="677" stroke="#dcdcdc"/>
<line x1="1129.5" x2="1129.5" y1="485" y2="677" stroke="#dcdcdc"/>
<line x1="1148.5" x2="1148.5" y1="485" y2="677" stroke="#dcdcdc"/>
<line x1="1167.5" x2="1167.5" y1="485" y2="677" stroke="#8a8a8a"/>
<line x1="1187.5" x2="1187.5" y1="485" y2="677" stroke="#dcdcdc"/>
<line x1="1206.5" x2="1206.5" y1="485" y2="677" stroke="#dcdcdc"/>
<line x1="1225.5" x2="1225.5" y1="485" y2="677" stroke="#dcdcdc"/>
<line x1="418.5" x2="418.5" y1="485" y2="677" stroke="#808080"/>
<line x1="380" x2="1234" y1="600.5" y2="600.5" stroke="#909090"/>

</g>
<g clip-path="url(#pc)">
<polyline fill="none" stroke="#111111" stroke-width="2" stroke-linejoin="round" points="398.4,632.5 443.0,633.6 454.3,634.1 466.3,636.3 496.0,636.3 517.0,639.7 568.3,639.7 579.6,641.6 590.0,642.1 601.0,642.5 621.0,645.2 686.2,645.2 695.0,647.1 707.0,647.6 724.8,649.7 744.0,650.5 755.3,650.2 764.0,653.7 774.6,652.9 785.0,654.2 795.0,654.5 806.5,656.3 856.0,656.3 875.4,657.2 886.0,658.1 926.7,657.7 935.5,659.5 947.9,659.8 956.7,659.3 970.0,659.8 978.8,661.6 989.4,661.6"/>
<polyline fill="none" stroke="#1c8c1c" stroke-width="2" stroke-linejoin="round" points="398.4,547.3 410.0,549.6 423.0,548.5 436.6,546.9 443.8,544.8 454.3,549.0 465.5,551.7 476.7,552.8 486.4,555.4 497.6,558.9 508.9,560.8 523.3,564.5 534.6,569.4 545.8,572.1 560.3,570.2 573.0,572.0 585.0,574.5 601.0,576.1 611.5,575.0 620.3,572.4 631.6,570.2 643.6,567.6 652.5,568.6 663.7,570.2 675.8,572.6 686.2,589.3 695.8,576.9 707.0,577.8 716.7,578.2 726.4,578.2 736.0,577.4 745.6,578.1 755.3,579.8 765.0,581.3 774.6,582.1 785.3,580.9 795.9,582.4 806.5,583.0 816.2,584.4 826.0,584.0 836.5,585.1 847.1,586.5 856.0,587.0 866.0,587.0 876.0,602.0 886.0,602.0 899.3,590.4 908.1,590.9 926.7,598.0 935.5,608.0 949.6,610.0 957.6,609.5 970.0,602.4 979.3,616.0 989.4,618.8"/>
<polyline fill="none" stroke="#8f8c1c" stroke-width="2" stroke-linejoin="round" points="398.4,540.9 410.0,538.4 423.0,539.3 443.0,545.3 475.0,550.0 496.0,552.5 526.5,553.8 544.0,557.3 566.7,558.9 585.0,560.6 602.7,560.6 610.7,561.7 622.0,563.6 633.0,564.4 654.0,567.0 675.0,568.9 686.2,569.7 695.8,568.9 706.3,568.6 716.7,570.8 726.4,572.6 735.2,572.6 745.6,575.7 753.7,578.9 765.0,579.0 774.6,581.8 785.0,584.2 797.7,585.6 815.3,587.4 827.7,591.5 845.4,598.0 856.0,599.2 865.7,598.3 879.0,600.6 889.6,601.0 907.2,603.3 919.6,606.3 930.2,607.4 949.6,607.7 956.7,606.5 970.0,608.6 978.8,606.3 989.4,607.4"/>
<polyline fill="none" stroke="#3a86c8" stroke-width="2" stroke-linejoin="round" points="398.4,599.8 423.0,600.7 443.0,602.5 590.0,613.1 610.7,616.2 668.5,621.0 686.2,623.7 707.0,625.0 718.3,626.2 731.2,625.8 740.8,628.2 756.9,631.0 785.0,632.9 797.7,634.8 831.2,637.5 859.5,638.0 896.6,639.3 916.0,640.7 932.0,643.7 949.6,646.3 963.8,649.3 974.4,652.0 983.2,653.0 989.4,653.4"/>
<polyline fill="none" stroke="#e0343f" stroke-width="2" stroke-linejoin="round" points="398.4,598.3 423.0,599.2 443.0,601.0 590.0,611.6 610.7,614.7 668.5,619.5 686.2,622.2 707.0,623.5 718.3,624.7 731.2,624.3 740.8,626.7 756.9,629.5 785.0,631.4 797.7,633.3 831.2,636.0 859.5,636.5 896.6,637.8 916.0,639.2 932.0,642.2 949.6,644.8 963.8,647.8 974.4,650.5 983.2,651.5 989.4,651.9"/>
<circle cx="418.4" cy="600.1" r="3.7" fill="#555555"/>
</g>
<rect x="379" y="484" width="1" height="194" fill="#000"/>
<rect x="379" y="677" width="855" height="1.3" fill="#000"/>
<path d="M417.5 603.5 L417.5 619.5 L421.2 616 L424 622 L426.6 620.8 L423.8 615 L428.8 615 Z" fill="#fff" stroke="#000" stroke-width="1" stroke-linejoin="miter"/>
</svg>
<div style="left:747.5px;top:462px;font-size:15.3px;line-height:18px;letter-spacing:-0.45px">Channel Profile - 2</div>
<div class="yl" style="top:497px">1425</div>
<div class="yl" style="top:522px">1420</div>
<div class="yl" style="top:546px">1415</div>
<div class="yl" style="top:570px">1410</div>
<div class="yl" style="top:595px">1405</div>
<div class="yl" style="top:619px">1400</div>
<div class="yl" style="top:643px">1395</div>
<div class="xl" style="left:377.5px">0</div>
<div class="xl" style="left:473.7px">500</div>
<div class="xl" style="left:569.9px">1000</div>
<div class="xl" style="left:666.0px">1500</div>
<div class="xl" style="left:762.2px">2000</div>
<div class="xl" style="left:858.4px">2500</div>
<div class="xl" style="left:954.6px">3000</div>
<div class="xl" style="left:1050.8px">3500</div>
<div class="xl" style="left:1147.0px">4000</div>
<div style="left:768px;top:701px;line-height:13px;letter-spacing:-0.1px">Channel length</div>
<div style="left:351px;top:701px;width:12px;height:12px;background:#555;border-radius:2px;border:1px solid #777;color:#fff;font-weight:bold;font-size:10px;line-height:10px;text-align:center">A</div>
<div class="tip" style="top:559px">S1 - Max. Water (ft)</div>
<div class="tip" style="top:572px">x = 104.140</div>
<div class="tip" style="top:585px">y = 1404.860</div>
<div style="left:1000px;top:485px;width:234px;height:192px;overflow:hidden">
<div style="left:-1000px;top:-485px;width:1251px;height:747px">
<svg class="abs" style="left:1026px;top:497px" width="24" height="4"><line x1="0" x2="24" y1="1.5" y2="1.5" stroke="#111111" stroke-width="2" /></svg>
<div class="cb" style="left:1057px;top:492px"><svg width="11" height="11" viewBox="0 0 11 11"><path d="M2 5.2 L4.3 8.6 L8.8 1.8" fill="none" stroke="#000" stroke-width="2"/></svg></div>
<div class="lg" style="left:1076px;top:490px">S1 - Bed elevation (ft)</div>
<svg class="abs" style="left:1026px;top:523px" width="24" height="4"><line x1="0" x2="24" y1="1.5" y2="1.5" stroke="#1c8c1c" stroke-width="2" /></svg>
<div class="cb" style="left:1057px;top:518px"><svg width="11" height="11" viewBox="0 0 11 11"><path d="M2 5.2 L4.3 8.6 L8.8 1.8" fill="none" stroke="#000" stroke-width="2"/></svg></div>
<div class="lg" style="left:1076px;top:516px">S1 - Left bank (ft)</div>
<svg class="abs" style="left:1026px;top:549px" width="24" height="4"><line x1="0" x2="24" y1="1.5" y2="1.5" stroke="#8f8c1c" stroke-width="2" /></svg>
<div class="cb" style="left:1057px;top:544px"><svg width="11" height="11" viewBox="0 0 11 11"><path d="M2 5.2 L4.3 8.6 L8.8 1.8" fill="none" stroke="#000" stroke-width="2"/></svg></div>
<div class="lg" style="left:1076px;top:542px">S1 - Right bank (ft)</div>
<svg class="abs" style="left:1026px;top:575px" width="24" height="4"><line x1="0" x2="24" y1="1.5" y2="1.5" stroke="#2f78b4" stroke-width="2" /></svg>
<div class="cb" style="left:1057px;top:570px"><svg width="11" height="11" viewBox="0 0 11 11"><path d="M2 5.2 L4.3 8.6 L8.8 1.8" fill="none" stroke="#000" stroke-width="2"/></svg></div>
<div class="lg" style="left:1076px;top:568px">S1 - Max. Water (ft)</div>
<svg class="abs" style="left:1026px;top:601px" width="24" height="4"><line x1="0" x2="24" y1="1.5" y2="1.5" stroke="#4a90c8" stroke-width="2" stroke-dasharray="7 2"/></svg>
<div class="cb" style="left:1057px;top:596px"></div>
<div class="lg" style="left:1076px;top:594px">S1 - Velocity (fps)</div>
<svg class="abs" style="left:1026px;top:627px" width="24" height="4"><line x1="0" x2="24" y1="1.5" y2="1.5" stroke="#4a90c8" stroke-width="2" stroke-dasharray="2.6 2.6"/></svg>
<div class="cb" style="left:1057px;top:622px"></div>
<div class="lg" style="left:1076px;top:620px">S1 - Froude</div>
<svg class="abs" style="left:1026px;top:653px" width="24" height="4"><line x1="0" x2="24" y1="1.5" y2="1.5" stroke="#4a90c8" stroke-width="2" stroke-dasharray="8 3 3 3"/></svg>
<div class="cb" style="left:1057px;top:648px"></div>
<div class="lg" style="left:1076px;top:646px">S1 - Flow area (sq. ft)</div>
<svg class="abs" style="left:1026px;top:679px" width="24" height="4"><line x1="0" x2="24" y1="1.5" y2="1.5" stroke="#4a90c8" stroke-width="2" stroke-dasharray="6 3"/></svg>
<div class="cb" style="left:1057px;top:674px"></div>
<div class="lg" style="left:1076px;top:672px">S1 - Wetted perimeter (ft)</div>
</div></div>
<div class="cb" style="left:1053px;top:724px"><svg width="11" height="11" viewBox="0 0 11 11"><path d="M2 5.2 L4.3 8.6 L8.8 1.8" fill="none" stroke="#000" stroke-width="2"/></svg></div>
<div style="left:1071px;top:725px;line-height:13px">Inspect values</div>
<div class="btn" style="left:1154px;top:720px;width:80px;height:21px;line-height:21px">Auto Range</div>
</body></html>
